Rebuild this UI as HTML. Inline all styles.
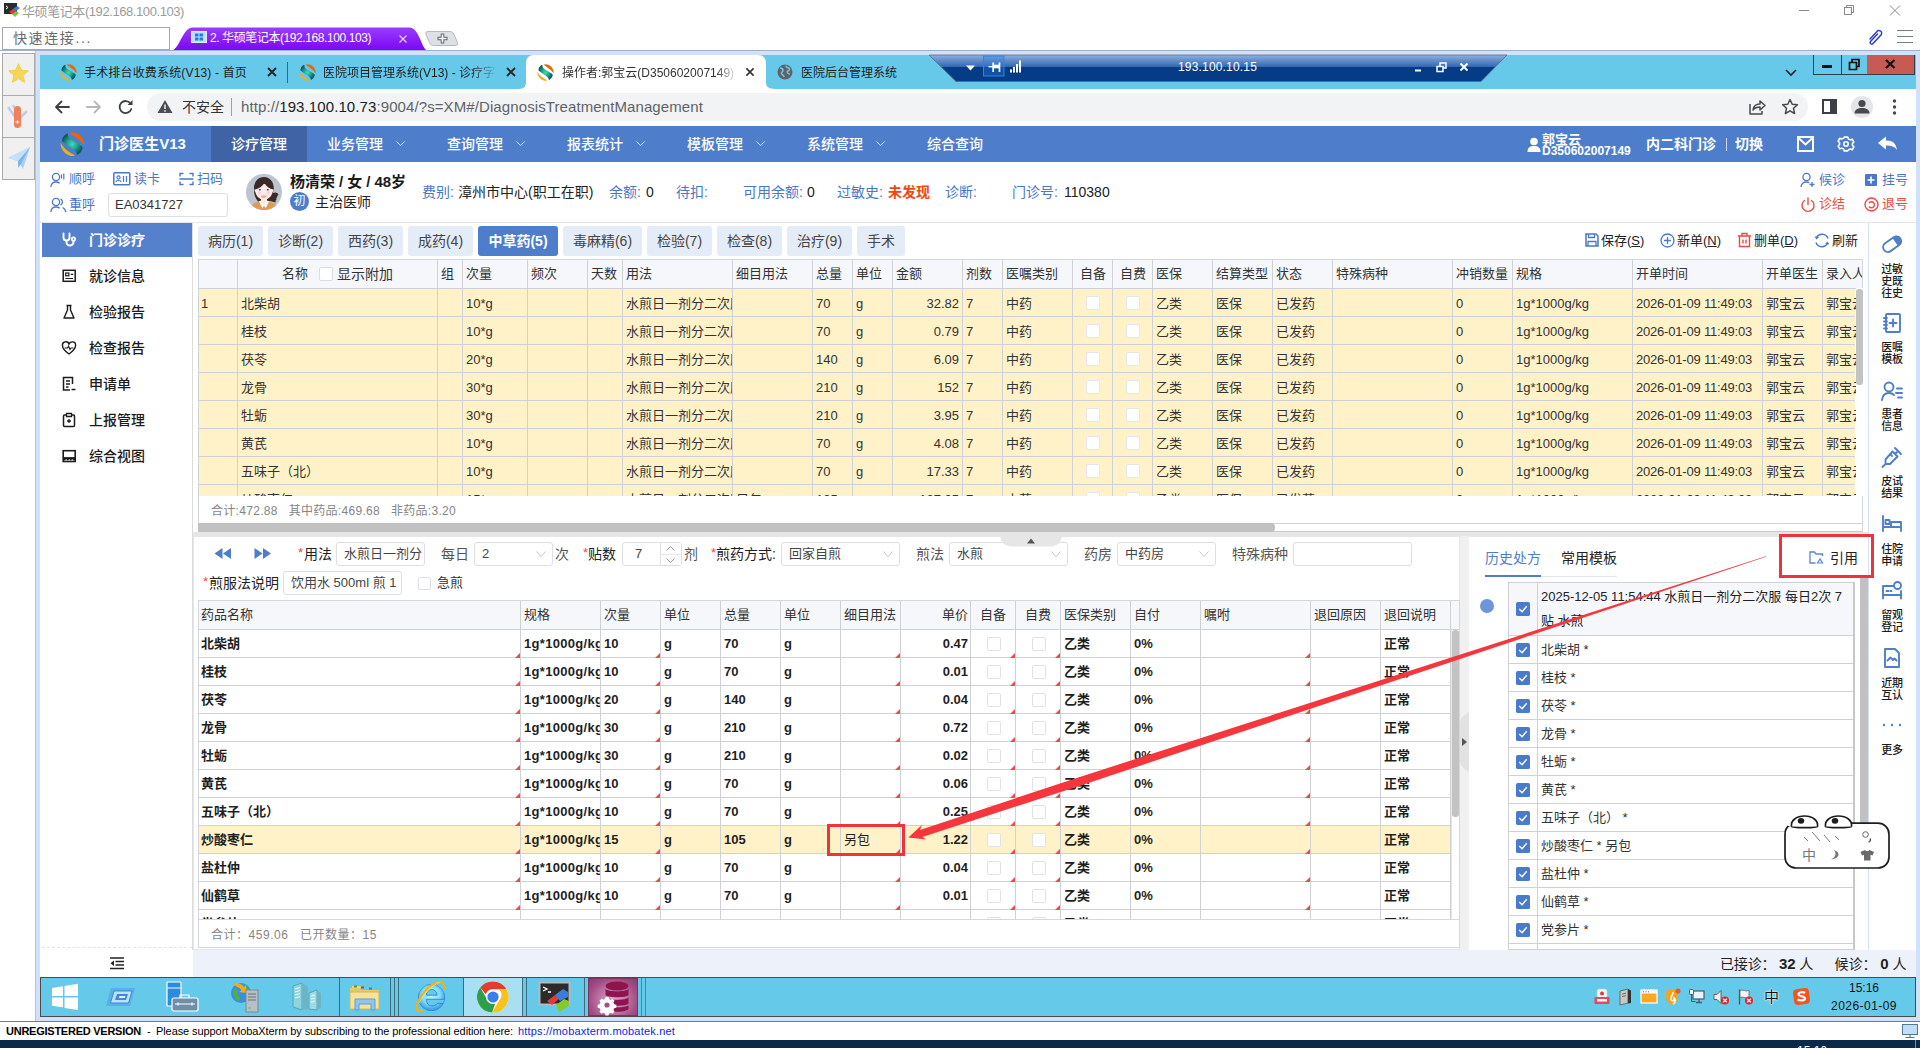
<!DOCTYPE html>
<html lang="zh"><head><meta charset="utf-8"><title>门诊医生V13</title>
<style>
html,body{margin:0;padding:0}
body{width:1920px;height:1048px;position:relative;overflow:hidden;background:#fff;font-family:"Liberation Sans","Noto Sans CJK SC",sans-serif;font-size:13px;color:#222}
div,svg,span{box-sizing:border-box}
body div{position:absolute}
.t{white-space:nowrap}
.b{font-weight:bold}
.bl{color:#4a78c6}
svg{position:absolute;overflow:visible}
.cb{width:14px;height:14px;border:1px solid #d8dce5;border-radius:2px;background:#fff}
.ck{width:15px;height:15px;border-radius:2px;background:#4a7bcb}
.tri{width:0;height:0;border-left:5px solid transparent;border-bottom:5px solid #ea4a50}
</style></head><body>

<svg style="left:4px;top:3px" width="17" height="17" viewBox="0 0 17 17"><rect x="0" y="0" width="13" height="11" fill="#2b2b2b"/><path d="M2 3l2 1.5-2 1.5" stroke="#fff" stroke-width="1" fill="none"/><path d="M5 9l4-3 3 2-4 3z" fill="#e23a3a"/><path d="M9 6l4-3 3 2-4 3z" fill="#3b7ddd"/><path d="M8 11l4-3 3 2-4 4z" fill="#7bc62d"/></svg>
<div class="t" style="left:22px;top:1px;height:22px;line-height:22px;font-size:13px;color:#9b9b9b;letter-spacing:-0.421px">华硕笔记本(192.168.100.103)</div>
<svg style="left:1790px;top:0" width="130" height="24" viewBox="0 0 130 24"><g stroke="#8a8a8a" stroke-width="1" fill="none"><path d="M9 10.5h10"/><rect x="54.5" y="7.500" width="7" height="7"/><path d="M56.500 7.500v-2h7v7h-2"/><path d="M100 5.500l10 10M110 5.500l-10 10"/></g></svg>
<div style="left:2px;top:27px;width:168px;height:23px;border:1px solid #a9a9a9;background:#fff"></div>
<div class="t" style="left:13px;top:27px;height:23px;line-height:23px;font-size:14px;color:#6a6a6a;letter-spacing:1.618px">快速连接...</div>
<svg style="left:170px;top:26px" width="300" height="26" viewBox="0 0 300 26"><defs><linearGradient id="pg" x1="0" y1="0" x2="0" y2="1"><stop offset="0" stop-color="#9a3cff"/><stop offset="1" stop-color="#7a06f2"/></linearGradient></defs><path d="M1 25 C10 23 12 3 22 1.500 L240 1.500 C250 3 251 23 258 25 Z" fill="url(#pg)"/><path d="M258 5.500 h22 q3 0 4 3 l3.500 8 q1 3-2 3 h-22 q-3 0-4-3 l-3.500-8 q-1-3 2-3z" fill="#dde1e6" stroke="#b3bac4" stroke-width="1"/><path d="M272.500 7.500v10M267.500 12.500h10" stroke="#666" stroke-width="3.600" fill="none"/><path d="M272.500 8.500v8M268.500 12.500h8" stroke="#f4f4f4" stroke-width="1.700" fill="none"/><g><rect x="21.500" y="5.500" width="15" height="11" fill="#bde0f8" stroke="#d9ecfb" stroke-width="1"/><path d="M25 7.500h3.500v3H25zM29.500 7.500H33v3h-3.500zM25 11.500h3.500v3H25zM29.500 11.500H33v3h-3.500z" fill="#1b7fe0"/><path d="M25 19.500h8M29 17v2.500" stroke="#2c5a5f" stroke-width="1.500"/></g><path d="M229.500 9.500l7 7M236.500 9.500l-7 7" stroke="#e9d8ff" stroke-width="1.100"/></svg>
<div class="t" style="left:210px;top:27px;height:23px;line-height:23px;font-size:12px;color:#fff;letter-spacing:-0.417px">2. 华硕笔记本(192.168.100.103)</div>
<svg style="left:1866px;top:28px" width="50" height="18" viewBox="0 0 50 18"><path d="M4 11l7-7.500a2.600 2.600 0 0 1 4 3.500l-8 8.500a1.600 1.600 0 0 1-2.500-2l7-7.500" stroke="#2e3fc0" stroke-width="1.500" fill="none" stroke-linecap="round"/><path d="M31 2.500h16M31 8.500h16M31 14.500h16" stroke="#6f7f86" stroke-width="1.200"/></svg>
<div style="left:0px;top:50px;width:1920px;height:1px;background:#9fb0c8"></div>
<div style="left:35px;top:51px;width:1885px;height:971px;background:#cfe1fb"></div>
<div style="left:35px;top:51px;width:1px;height:971px;background:#b9c3d6"></div>
<div style="left:0px;top:51px;width:35px;height:971px;background:#fff"></div>
<div style="left:2px;top:53px;width:33px;height:127px;background:#f0f0f0;border:1px solid #aaa"></div>
<div style="left:3px;top:95px;width:31px;height:1px;background:#aaa"></div>
<div style="left:3px;top:137px;width:31px;height:1px;background:#aaa"></div>
<svg style="left:6px;top:61px" width="25" height="25" viewBox="0 0 28 28"><path d="M14 3l3.300 7.200 7.700.800-5.800 5.200 1.700 7.800L14 20l-6.900 4 1.700-7.800L3 11l7.700-.800z" fill="#f6d657" stroke="#f0c93c" stroke-width=".8" stroke-linejoin="round"/></svg>
<svg style="left:5px;top:101px" width="28" height="30" viewBox="0 0 28 30"><path d="M3 6l10 14M8 4l8 14M22 10l-12 12" stroke="#c3c9e8" stroke-width="2.500" fill="none"/><rect x="9" y="5" width="7" height="22" rx="3.500" fill="#f0805c"/><path d="M12.500 19v4M10.500 21h4" stroke="#fff" stroke-width="1"/></svg>
<svg style="left:5px;top:143px" width="28" height="30" viewBox="0 0 28 30"><path d="M3 15L25 4 18 26l-5-8z" fill="#a9d0f2"/><path d="M25 4L13 18v7l3-4" fill="#7fb5e6"/><path d="M3 15l10 3L25 4z" fill="#c5e0f8"/></svg>
<div style="left:40px;top:55px;width:1876px;height:962px;background:#fff"></div>
<div style="left:40px;top:55px;width:1876px;height:34px;background:#67c9ea"></div>
<svg style="left:59.5px;top:63.5px" width="17.0" height="17.0" viewBox="0 0 24.400 24.400"><defs><radialGradient id="lgr1" cx="12.200" cy="12.200" r="10.500" gradientUnits="userSpaceOnUse"><stop offset="0" stop-color="#40dfb9"/><stop offset=".55" stop-color="#1f9c8a"/><stop offset="1" stop-color="#095a5b"/></radialGradient></defs><path d="M9.300 1C12.500 -.8 18 .5 21 4.500c2.200 2.800 3.300 5.800 2.900 8.300-.1.300-.4.300-.6 0C21.500 9.300 15.500 5 9.300 1z" fill="#ee6403"/><path d="M7.500 1.200C4.500 2.500 2.500 5 2.200 7.500c-.2 1.500 0 2 1.300 3C8.500 14.500 15 17.500 16.300 20.500c.5 1 .5 2 .8 2.300C19.500 22 21.500 20 22.400 17c.3-1.500 0-2.500-1.400-3.500C16 10 9.500 7.500 8.200 4.500 7.700 3.300 8 2 7.500 1.200z" fill="url(#lgr1)"/><path d="M.5 10.600C.2 14 1.700 18 5 21c3 2.600 7 3.700 9.300 2.800.4-.2.400-.5 0-.8C9 20.500 3 16 .5 10.600z" fill="#f2ad1c"/></svg>
<div class="t" style="left:84px;top:61px;height:24px;line-height:24px;font-size:12px;color:#1d1d1d;letter-spacing:0.166px">手术排台收费系统(V13) - 首页</div>
<svg style="left:266px;top:66px" width="12" height="12" viewBox="-6 -6 12 12"><path d="M-4 -4L4 4M4 -4L-4 4" stroke="#222" stroke-width="1.8"/></svg>
<div style="left:287px;top:62px;width:1px;height:21px;background:#46626e"></div>
<svg style="left:298.5px;top:63.5px" width="17.0" height="17.0" viewBox="0 0 24.400 24.400"><defs><radialGradient id="lgr2" cx="12.200" cy="12.200" r="10.500" gradientUnits="userSpaceOnUse"><stop offset="0" stop-color="#40dfb9"/><stop offset=".55" stop-color="#1f9c8a"/><stop offset="1" stop-color="#095a5b"/></radialGradient></defs><path d="M9.300 1C12.500 -.8 18 .5 21 4.500c2.200 2.800 3.300 5.800 2.900 8.300-.1.300-.4.300-.6 0C21.500 9.300 15.500 5 9.300 1z" fill="#ee6403"/><path d="M7.500 1.200C4.500 2.500 2.500 5 2.200 7.500c-.2 1.500 0 2 1.300 3C8.500 14.500 15 17.500 16.300 20.500c.5 1 .5 2 .8 2.300C19.500 22 21.500 20 22.400 17c.3-1.500 0-2.500-1.400-3.500C16 10 9.500 7.500 8.200 4.500 7.700 3.300 8 2 7.500 1.200z" fill="url(#lgr2)"/><path d="M.5 10.600C.2 14 1.700 18 5 21c3 2.600 7 3.700 9.300 2.800.4-.2.400-.5 0-.8C9 20.500 3 16 .5 10.600z" fill="#f2ad1c"/></svg>
<div class="t" style="left:323px;top:61px;height:24px;line-height:24px;font-size:12px;color:#1d1d1d;width:175px;overflow:hidden;-webkit-mask-image:linear-gradient(90deg,#000 85%,transparent);mask-image:linear-gradient(90deg,#000 85%,transparent)">医院项目管理系统(V13) - 诊疗字</div>
<svg style="left:505px;top:66px" width="12" height="12" viewBox="-6 -6 12 12"><path d="M-4 -4L4 4M4 -4L-4 4" stroke="#222" stroke-width="1.8"/></svg>
<svg style="left:518px;top:55px" width="258" height="34" viewBox="0 0 258 33" preserveAspectRatio="none"><path d="M0 33 C7 33 8 30 8 26 V8 C8 3 11 0 16 0 H240 C245 0 248 3 248 8 V26 C248 30 249 33 258 33 Z" fill="#fff"/></svg>
<svg style="left:536.5px;top:63.5px" width="17.0" height="17.0" viewBox="0 0 24.400 24.400"><defs><radialGradient id="lgr3" cx="12.200" cy="12.200" r="10.500" gradientUnits="userSpaceOnUse"><stop offset="0" stop-color="#40dfb9"/><stop offset=".55" stop-color="#1f9c8a"/><stop offset="1" stop-color="#095a5b"/></radialGradient></defs><path d="M9.300 1C12.500 -.8 18 .5 21 4.500c2.200 2.800 3.300 5.800 2.900 8.300-.1.300-.4.300-.6 0C21.500 9.300 15.500 5 9.300 1z" fill="#ee6403"/><path d="M7.500 1.200C4.500 2.500 2.500 5 2.200 7.500c-.2 1.500 0 2 1.300 3C8.500 14.500 15 17.500 16.300 20.500c.5 1 .5 2 .8 2.300C19.500 22 21.500 20 22.400 17c.3-1.500 0-2.500-1.400-3.500C16 10 9.500 7.500 8.200 4.500 7.700 3.300 8 2 7.500 1.200z" fill="url(#lgr3)"/><path d="M.5 10.600C.2 14 1.700 18 5 21c3 2.600 7 3.700 9.300 2.800.4-.2.400-.5 0-.8C9 20.500 3 16 .5 10.600z" fill="#f2ad1c"/></svg>
<div class="t" style="left:562px;top:61px;height:24px;line-height:24px;font-size:12px;color:#333;width:176px;overflow:hidden;-webkit-mask-image:linear-gradient(90deg,#000 88%,transparent);mask-image:linear-gradient(90deg,#000 88%,transparent)">操作者:郭宝云(D350602007149)</div>
<svg style="left:744px;top:66px" width="12" height="12" viewBox="-6 -6 12 12"><path d="M-3.6 -3.6L3.6 3.6M3.6 -3.6L-3.6 3.6" stroke="#333" stroke-width="1.6"/></svg>
<svg style="left:777px;top:64px" width="16" height="16" viewBox="0 0 16 16"><circle cx="8" cy="8" r="7.500" fill="#5f6368"/><path d="M3 4c2 0 3 1 3 2.500S4 8 4.500 9.500 7 11 7 13M9 1.500c0 2 1 2 2.500 2.500S13 6 11 7s0 3 2 3" stroke="#67c9ea" stroke-width="1.500" fill="none"/></svg>
<div class="t" style="left:801px;top:61px;height:24px;line-height:24px;font-size:12px;color:#1d1d1d">医院后台管理系统</div>
<svg style="left:925px;top:55px" width="590" height="28" viewBox="0 0 590 28"><defs><linearGradient id="cb" x1="0" y1="0" x2="0" y2="1"><stop offset="0" stop-color="#8db0de"/><stop offset=".44" stop-color="#3567b2"/><stop offset=".46" stop-color="#063b86"/><stop offset="1" stop-color="#063b86"/></linearGradient></defs><path d="M4 0 H582 L556 26.500 H31 Z" fill="url(#cb)" stroke="#5a6a80" stroke-width=".8"/><rect x="58.500" y="1" width="20.500" height="20" fill="#2a7fe0" fill-opacity=".35" stroke="#2a86e6" stroke-width="1"/><path d="M41 10.500h9l-4.500 5z" fill="#fff"/><path d="M63.500 11.700h5" stroke="#fff" stroke-width="1.400"/><path d="M68.200 7.500v9.500M74.500 7.500v9.500" stroke="#fff" stroke-width="1.700"/><path d="M68 11.500h7" stroke="#fff" stroke-width="3.600"/><path d="M86 17.500v-3M89 17.500v-5.500M92 17.500v-8.500M95 17.500v-12" stroke="#fff" stroke-width="2"/><path d="M490 15.500h6" stroke="#fff" stroke-width="2"/><path d="M512 11.500h6v5h-6zM515 11v-3h6v5h-3" stroke="#fff" stroke-width="1.500" fill="none"/><path d="M535.500 8.500l7 7M542.500 8.500l-7 7" stroke="#fff" stroke-width="2"/></svg>
<div class="t" style="left:1178px;top:56px;height:22px;line-height:22px;font-size:12px;color:#fff;letter-spacing:0.173px">193.100.10.15</div>
<svg style="left:1784px;top:67.500px" width="14" height="10" viewBox="0 0 14 10"><path d="M2 2l5 5 5-5" stroke="#222" stroke-width="1.600" fill="none"/></svg>
<div style="left:1813px;top:55px;width:102px;height:20px;background:#67c9ea;border:1px solid #2a3f48;border-top:none"></div>
<div style="left:1867px;top:55px;width:47px;height:19px;background:#c75a52"></div>
<div style="left:1841px;top:55px;width:1px;height:19px;background:#2a3f48"></div>
<svg style="left:1813px;top:55px" width="102" height="20" viewBox="0 0 102 20"><path d="M9 11.500h10" stroke="#111" stroke-width="3"/><path d="M36.500 7.500h7v7h-7zM39 7v-2.500h7v7h-2.500" stroke="#111" stroke-width="1.700" fill="none"/><path d="M73 5l8.500 8M81.500 5l-8.500 8" stroke="#111" stroke-width="2.300"/></svg>
<div style="left:40px;top:89px;width:1876px;height:36px;background:#fff"></div>
<div style="left:147px;top:93px;width:1661px;height:28px;background:#f1f3f4;border-radius:14px"></div>
<svg style="left:50px;top:96px" width="100" height="22" viewBox="0 0 100 22"><g fill="none" stroke-width="1.800" stroke-linecap="round" stroke-linejoin="round"><path d="M19 11H6M11.500 5.500L6 11l5.500 5.500" stroke="#3c4043"/><path d="M37 11h13M44.500 5.500L50 11l-5.500 5.500" stroke="#b5b8bb"/><path d="M80.500 7.500A6 6 0 1 0 81.300 13" stroke="#3c4043"/></g><path d="M82.500 4v5h-5z" fill="#3c4043"/></svg>
<svg style="left:157px;top:99px" width="16" height="15" viewBox="0 0 16 15"><path d="M8 1L15.500 14H.5z" fill="#4a4d51"/><path d="M8 5.500v4.500M8 11.300v1.500" stroke="#f1f3f4" stroke-width="1.500"/></svg>
<div class="t" style="left:182px;top:95px;height:24px;line-height:24px;font-size:14px;color:#333">不安全</div>
<div style="left:231px;top:98px;width:1px;height:18px;background:#9aa0a6"></div>
<div class="t url" style="left:241px;top:95px;height:24px;line-height:24px;font-size:15px;color:#202124;letter-spacing:0.098px"><span style="color:#5f6368">http://</span>193.100.10.73<span style="color:#5f6368">:9004/?s=XM#/DiagnosisTreatmentManagement</span></div>
<svg style="left:1745px;top:95px" width="165" height="24" viewBox="0 0 165 24"><g fill="none" stroke="#474a4d" stroke-width="1.500" stroke-linejoin="round"><path d="M5 9v10h12v-3"/><path d="M8 15c.5-4 3-6 7-6V6l5 4.500-5 4.500v-3c-3 0-5 .5-7 3z"/><path d="M45 4.500l2.200 4.800 5.200.500-3.900 3.500 1.100 5.200L45 15.800l-4.600 2.700 1.100-5.200-3.900-3.500 5.200-.500z"/></g><rect x="78" y="5" width="13" height="13" fill="none" stroke="#3c4043" stroke-width="2"/><rect x="85" y="5" width="6" height="13" fill="#3c4043"/><circle cx="117" cy="12" r="11" fill="#e3e5e8"/><circle cx="117" cy="8.500" r="3.600" fill="#474a4d"/><path d="M109.500 18.500c0-4 3.500-5.500 7.500-5.500s7.500 1.500 7.500 5.500z" fill="#474a4d"/><circle cx="149.500" cy="6" r="1.700" fill="#474a4d"/><circle cx="149.500" cy="12" r="1.700" fill="#474a4d"/><circle cx="149.500" cy="18" r="1.700" fill="#474a4d"/></svg>
<div style="left:40px;top:125px;width:1876px;height:1px;background:#fff"></div>
<div style="left:40px;top:126px;width:1876px;height:36px;background:#4e7ecb"></div>
<div style="left:211px;top:126px;width:96px;height:36px;background:#3f63a4"></div>
<svg style="left:59.8px;top:131.8px" width="24.4" height="24.4" viewBox="0 0 24.400 24.400"><defs><radialGradient id="lgr4" cx="12.200" cy="12.200" r="10.500" gradientUnits="userSpaceOnUse"><stop offset="0" stop-color="#40dfb9"/><stop offset=".55" stop-color="#1f9c8a"/><stop offset="1" stop-color="#095a5b"/></radialGradient></defs><path d="M9.300 1C12.500 -.8 18 .5 21 4.500c2.200 2.800 3.300 5.800 2.900 8.300-.1.300-.4.300-.6 0C21.500 9.300 15.500 5 9.300 1z" fill="#ee6403"/><path d="M7.500 1.200C4.500 2.500 2.500 5 2.200 7.500c-.2 1.500 0 2 1.300 3C8.500 14.500 15 17.500 16.300 20.500c.5 1 .5 2 .8 2.300C19.500 22 21.500 20 22.400 17c.3-1.500 0-2.500-1.400-3.500C16 10 9.500 7.500 8.200 4.500 7.700 3.300 8 2 7.500 1.200z" fill="url(#lgr4)"/><path d="M.5 10.600C.2 14 1.700 18 5 21c3 2.600 7 3.700 9.300 2.800.4-.2.400-.5 0-.8C9 20.500 3 16 .5 10.600z" fill="#f2ad1c"/></svg>
<div class="t" style="left:99px;top:126px;height:36px;line-height:36px;font-size:15px;font-weight:bold;color:#fff;letter-spacing:0.042px">门诊医生V13</div>
<div class="t" style="left:231px;top:126px;height:36px;line-height:36px;font-size:14px;color:#fff;font-weight:500">诊疗管理</div>
<div class="t" style="left:327px;top:126px;height:36px;line-height:36px;font-size:14px;color:#fff;font-weight:500">业务管理</div>
<svg style="left:396px;top:141px" width="9" height="6" viewBox="0 0 9 6"><path d="M.5.500l4 4 4-4" stroke="#dfe8f7" stroke-width="1" fill="none"/></svg>
<div class="t" style="left:447px;top:126px;height:36px;line-height:36px;font-size:14px;color:#fff;font-weight:500">查询管理</div>
<svg style="left:516px;top:141px" width="9" height="6" viewBox="0 0 9 6"><path d="M.5.500l4 4 4-4" stroke="#dfe8f7" stroke-width="1" fill="none"/></svg>
<div class="t" style="left:567px;top:126px;height:36px;line-height:36px;font-size:14px;color:#fff;font-weight:500">报表统计</div>
<svg style="left:636px;top:141px" width="9" height="6" viewBox="0 0 9 6"><path d="M.5.500l4 4 4-4" stroke="#dfe8f7" stroke-width="1" fill="none"/></svg>
<div class="t" style="left:687px;top:126px;height:36px;line-height:36px;font-size:14px;color:#fff;font-weight:500">模板管理</div>
<svg style="left:756px;top:141px" width="9" height="6" viewBox="0 0 9 6"><path d="M.5.500l4 4 4-4" stroke="#dfe8f7" stroke-width="1" fill="none"/></svg>
<div class="t" style="left:807px;top:126px;height:36px;line-height:36px;font-size:14px;color:#fff;font-weight:500">系统管理</div>
<svg style="left:876px;top:141px" width="9" height="6" viewBox="0 0 9 6"><path d="M.5.500l4 4 4-4" stroke="#dfe8f7" stroke-width="1" fill="none"/></svg>
<div class="t" style="left:927px;top:126px;height:36px;line-height:36px;font-size:14px;color:#fff;font-weight:500">综合查询</div>
<svg style="left:1527px;top:137px" width="14" height="16" viewBox="0 0 14 16"><circle cx="7" cy="4.500" r="3.800" fill="#fff"/><path d="M.5 15c0-5 3-6 6.500-6s6.500 1 6.500 6z" fill="#fff"/></svg>
<div class="t" style="left:1542px;top:133px;height:13px;line-height:13px;font-size:13px;font-weight:bold;color:#fff">郭宝云</div>
<div class="t" style="left:1542px;top:145px;height:13px;line-height:13px;font-size:12px;font-weight:bold;color:#fff">D350602007149</div>
<div class="t" style="left:1646px;top:126px;height:36px;line-height:36px;font-size:14px;font-weight:bold;color:#fff">内二科门诊</div>
<div style="left:1726px;top:138px;width:1px;height:13px;background:#c9d8f0"></div>
<div class="t" style="left:1735px;top:126px;height:36px;line-height:36px;font-size:14px;font-weight:bold;color:#fff">切换</div>
<svg style="left:1796px;top:134px" width="110" height="20" viewBox="0 0 110 20"><rect x="2" y="3" width="15" height="14" fill="none" stroke="#fff" stroke-width="2"/><path d="M3 4.500l6.500 6 6.500-6" stroke="#fff" stroke-width="2" fill="none"/><g transform="translate(50,10) scale(.86)"><path d="M-2-8h4l.8 2.200 2.200 1 2.200-.9 2 3.400-1.700 1.600v2.400l1.700 1.600-2 3.400-2.200-.9-2.200 1L2 8h-4l-.8-2.200-2.200-1-2.200.9-2-3.400 1.700-1.600v-2.400l-1.700-1.600 2-3.400 2.200.9 2.200-1z" fill="none" stroke="#fff" stroke-width="1.800" stroke-linejoin="round"/><circle r="2.600" fill="none" stroke="#fff" stroke-width="1.800"/></g><path d="M82 9l8-6.500v4c7 0 10 3 11 9.500-2.500-3.500-5.500-4.500-11-4.500v4z" fill="#fff"/></svg>
<div style="left:40px;top:162px;width:1876px;height:60px;background:#fff"></div>
<div style="left:40px;top:222px;width:1876px;height:1px;background:#e3e6ec"></div>
<svg style="left:50px;top:172px" width="18" height="16" viewBox="0 0 18 16"><circle cx="6" cy="5" r="3.600" fill="none" stroke="#4a78c6" stroke-width="1.300"/><path d="M.8 15c.4-3.500 2.500-5 5.200-5 1.500 0 2.800.5 3.600 1.300" fill="none" stroke="#4a78c6" stroke-width="1.300"/><path d="M11.500 2.500v4M13.800 1.500v6" stroke="#4a78c6" stroke-width="1.200"/></svg>
<div class="t" style="left:69px;top:168px;height:22px;line-height:22px;font-size:13px;color:#4a78c6">顺呼</div>
<svg style="left:113px;top:172px" width="18" height="14" viewBox="0 0 18 14"><rect x=".8" y=".8" width="16" height="12" rx="1" fill="none" stroke="#4a78c6" stroke-width="1.500"/><circle cx="5.500" cy="5.500" r="1.600" fill="none" stroke="#4a78c6" stroke-width="1.100"/><path d="M3 10c0-2 5-2 5 0M10.500 4v6M13.500 4v6" stroke="#4a78c6" stroke-width="1.200" fill="none"/></svg>
<div class="t" style="left:134px;top:168px;height:22px;line-height:22px;font-size:13px;color:#4a78c6">读卡</div>
<svg style="left:179px;top:172px" width="15" height="14" viewBox="0 0 15 14"><path d="M1 4.500V1.500h3.500M10.500 1.500H14v3M14 9.500v3h-3.500M4.500 12.500H1v-3M.5 7h14" stroke="#4a78c6" stroke-width="1.400" fill="none"/></svg>
<div class="t" style="left:197px;top:168px;height:22px;line-height:22px;font-size:13px;color:#4a78c6">扫码</div>
<svg style="left:50px;top:197px" width="18" height="16" viewBox="0 0 18 16"><circle cx="6" cy="5" r="3.600" fill="none" stroke="#4a78c6" stroke-width="1.300"/><path d="M.8 15c.4-3.500 2.500-5 5.200-5 1.500 0 2.800.5 3.600 1.300" fill="none" stroke="#4a78c6" stroke-width="1.300"/><path d="M10.500 1.800a3.600 3.600 0 0 1 0 6.400M12.500 10.500c1.800.8 3 2.300 3.300 4.500" stroke="#4a78c6" stroke-width="1.300" fill="none"/></svg>
<div class="t" style="left:69px;top:194px;height:22px;line-height:22px;font-size:13px;color:#4a78c6">重呼</div>
<div style="left:108px;top:193px;width:120px;height:24px;border:1px solid #dcdfe6;border-radius:3px;background:#fff"></div>
<div class="t" style="left:115px;top:193px;height:24px;line-height:24px;font-size:13px;color:#333">EA0341727</div>
<svg style="left:246px;top:174px" width="36" height="36" viewBox="0 0 36 36"><defs><clipPath id="av"><circle cx="18" cy="18" r="18"/></clipPath></defs><g clip-path="url(#av)"><rect width="36" height="36" fill="#bdc4d0"/><path d="M8 16C7.500 8 12 3 18 3s10.500 5 9.500 13l-.5 3c3-1.500 5 0 5.500 2-1 .3-1.500 1-1.200 2 -1 .5-1.200 1.500-.8 2.500-1 .5-1 1.500-1 3L24 27l-12 .5C9 24 8 20 8 16z" fill="#3b2b27"/><path d="M5.500 31.500C8 28.500 12 27.500 18 27.500s10 1 12.500 4L26 37H10z" fill="#dd9c55"/><path d="M13 27.500l2-1h6l2 1-3.300 6.500-1.700-2.200-1.700 2.200z" fill="#fff"/><path d="M15 23h6v5.500l-3 3.500-3-3.500z" fill="#fbe9e6"/><path d="M8.800 15c-.5 1.200-.3 2.500.6 3C10 22 13.500 25.500 18 25.500S26 22 26.600 18c.9-.5 1.100-1.800.6-3L24 10h-12z" fill="#fcebe8"/><path d="M8.300 15.500C8 9 12 5 18 5s10 4 9.500 10.500c-4-.5-7.500-3-9.200-7-1.500 4-5.500 6.500-10 7z" fill="#3b2b27"/><ellipse cx="13.900" cy="15.700" rx="1.100" ry=".75" fill="#2e2e60"/><ellipse cx="21.800" cy="15.700" rx="1.100" ry=".75" fill="#2e2e60"/><circle cx="13.300" cy="19" r="1.700" fill="#f8cfcf" opacity=".8"/><circle cx="22.400" cy="19" r="1.700" fill="#f8cfcf" opacity=".8"/><path d="M14.800 21.200c2 .5 4 .5 6 0-.3 2-1.500 2.800-3 2.800s-2.700-.8-3-2.800z" fill="#f4a99c"/></g></svg>
<div class="t" style="left:290px;top:170px;height:24px;line-height:24px;font-size:15px;font-weight:bold;color:#1a1a1a;letter-spacing:-0.054px">杨清荣 / 女 / 48岁</div>
<div style="left:290px;top:192px;width:19px;height:19px;background:#4e7ecb;border-radius:50%"></div>
<div class="t" style="left:290px;top:192px;height:19px;line-height:19px;font-size:12px;color:#fff;width:19px;text-align:center">初</div>
<div class="t" style="left:315px;top:191px;height:22px;line-height:22px;font-size:14px;color:#222">主治医师</div>
<div class="t" style="left:422px;top:181px;height:22px;line-height:22px;font-size:14px;color:#4a78c6">费别:</div>
<div class="t" style="left:458px;top:181px;height:22px;line-height:22px;font-size:14px;color:#222">漳州市中心(职工在职)</div>
<div class="t" style="left:609px;top:181px;height:22px;line-height:22px;font-size:14px;color:#4a78c6">余额:</div>
<div class="t" style="left:646px;top:181px;height:22px;line-height:22px;font-size:14px;color:#222">0</div>
<div class="t" style="left:676px;top:181px;height:22px;line-height:22px;font-size:14px;color:#4a78c6">待扣:</div>
<div class="t" style="left:743px;top:181px;height:22px;line-height:22px;font-size:14px;color:#4a78c6">可用余额:</div>
<div class="t" style="left:807px;top:181px;height:22px;line-height:22px;font-size:14px;color:#222">0</div>
<div class="t" style="left:837px;top:181px;height:22px;line-height:22px;font-size:14px;color:#4a78c6">过敏史:</div>
<div class="t" style="left:945px;top:181px;height:22px;line-height:22px;font-size:14px;color:#4a78c6">诊断:</div>
<div class="t" style="left:1012px;top:181px;height:22px;line-height:22px;font-size:14px;color:#4a78c6">门诊号:</div>
<div class="t" style="left:1064px;top:181px;height:22px;line-height:22px;font-size:14px;color:#222">110380</div>
<div class="t" style="left:888px;top:181px;height:22px;line-height:22px;font-size:14px;font-weight:bold;color:#f4450f">未发现</div>
<svg style="left:1800px;top:172px" width="16" height="16" viewBox="0 0 16 16"><circle cx="6.500" cy="5" r="3.600" fill="none" stroke="#4a78c6" stroke-width="1.300"/><path d="M1 15c.4-3.500 2.500-5 5.500-5 1 0 2 .2 2.800.7M12 10v5M9.500 12.500h5" fill="none" stroke="#4a78c6" stroke-width="1.300"/></svg>
<div class="t" style="left:1819px;top:169px;height:22px;line-height:22px;font-size:13px;color:#4a78c6">候诊</div>
<svg style="left:1865px;top:174px" width="12" height="12" viewBox="0 0 12 12"><rect width="12" height="12" rx="1" fill="#4a78c6"/><path d="M6 2.500v7M2.500 6h7" stroke="#fff" stroke-width="1.600"/></svg>
<div class="t" style="left:1882px;top:169px;height:22px;line-height:22px;font-size:13px;color:#4a78c6">挂号</div>
<svg style="left:1800px;top:197px" width="16" height="16" viewBox="0 0 16 16"><path d="M4.500 3.500a6 6 0 1 0 7 0M8 1v6.500" fill="none" stroke="#f0483e" stroke-width="1.400" stroke-linecap="round"/></svg>
<div class="t" style="left:1819px;top:193px;height:22px;line-height:22px;font-size:13px;color:#f0483e">诊结</div>
<svg style="left:1864px;top:197px" width="15" height="15" viewBox="0 0 15 15"><circle cx="7.500" cy="7.500" r="6.500" fill="none" stroke="#f0483e" stroke-width="1.400"/><path d="M5 6a3 3 0 1 1 0 3.500" fill="none" stroke="#f0483e" stroke-width="1.400"/></svg>
<div class="t" style="left:1882px;top:193px;height:22px;line-height:22px;font-size:13px;color:#f0483e">退号</div>
<div style="left:40px;top:223px;width:153px;height:754px;background:#fff"></div>
<div style="left:192px;top:223px;width:1px;height:727px;background:#dcdcdc"></div>
<div style="left:193px;top:223px;width:1675px;height:727px;background:#fff"></div>
<div style="left:42px;top:223px;width:150px;height:34px;background:#5580cc"></div>
<svg style="left:61px;top:232px" width="16" height="16" viewBox="0 0 16 16"><path d="M2.500 1.500v4a3 3 0 0 0 6 0v-4M5.500 8.500v1.500a3.500 3.500 0 0 0 7 0v-1" fill="none" stroke="#fff" stroke-width="1.900" stroke-linecap="round"/><circle cx="12.500" cy="7" r="1.700" fill="none" stroke="#fff" stroke-width="1.700"/></svg>
<div class="t" style="left:89px;top:228px;height:24px;line-height:24px;font-size:14px;color:#fff;font-weight:bold">门诊诊疗</div>
<svg style="left:61px;top:268px" width="16" height="16" viewBox="0 0 16 16"><rect x="2.200" y="2.300" width="12" height="11" fill="none" stroke="#1c1c1c" stroke-width="1.500"/><rect x="4.700" y="5" width="3.200" height="2.800" fill="none" stroke="#1c1c1c" stroke-width="1.200"/><path d="M9.800 6.400h2.400M4.500 10.500h7.500" stroke="#1c1c1c" stroke-width="1.200"/></svg>
<div class="t" style="left:89px;top:264px;height:24px;line-height:24px;font-size:14px;color:#1c1c1c;font-weight:500">就诊信息</div>
<svg style="left:61px;top:304px" width="16" height="16" viewBox="0 0 16 16"><path d="M5.500 1.500h5M6.500 1.500v4.500l-3.500 8h10l-3.500-8v-4.500" fill="none" stroke="#1c1c1c" stroke-width="1.400" stroke-linejoin="round"/></svg>
<div class="t" style="left:89px;top:300px;height:24px;line-height:24px;font-size:14px;color:#1c1c1c;font-weight:500">检验报告</div>
<svg style="left:61px;top:340px" width="16" height="16" viewBox="0 0 16 16"><path d="M8 14C3 10.500 1.500 8 1.500 5.800A3.300 3.300 0 0 1 8 4.500a3.300 3.300 0 0 1 6.500 1.300C14.500 8 13 10.500 8 14z" fill="none" stroke="#1c1c1c" stroke-width="1.400"/><path d="M3.500 8h3l1-2 1.500 3.500 1-1.500h2.500" fill="none" stroke="#1c1c1c" stroke-width="1.100"/></svg>
<div class="t" style="left:89px;top:336px;height:24px;line-height:24px;font-size:14px;color:#1c1c1c;font-weight:500">检查报告</div>
<svg style="left:61px;top:376px" width="16" height="16" viewBox="0 0 16 16"><path d="M11.500 8V1.500h-9v12.500h6.500" fill="none" stroke="#1c1c1c" stroke-width="1.500"/><path d="M5 5h4M5 8h4M5 11h2.500M10.500 13.500h4" stroke="#1c1c1c" stroke-width="1.300"/></svg>
<div class="t" style="left:89px;top:372px;height:24px;line-height:24px;font-size:14px;color:#1c1c1c;font-weight:500">申请单</div>
<svg style="left:61px;top:412px" width="16" height="16" viewBox="0 0 16 16"><rect x="2.500" y="3" width="11" height="11.500" rx="1" fill="none" stroke="#1c1c1c" stroke-width="1.500"/><path d="M5.500 1.500h5v3h-5z" fill="#fff" stroke="#1c1c1c" stroke-width="1.300"/><path d="M8 7v4M6 9h4" stroke="#1c1c1c" stroke-width="1.300"/></svg>
<div class="t" style="left:89px;top:408px;height:24px;line-height:24px;font-size:14px;color:#1c1c1c;font-weight:500">上报管理</div>
<svg style="left:61px;top:448px" width="16" height="16" viewBox="0 0 16 16"><rect x="2.200" y="2.700" width="12" height="10.800" fill="none" stroke="#1c1c1c" stroke-width="1.600"/><path d="M2.200 10.700h12" stroke="#1c1c1c" stroke-width="3.200"/><path d="M5.200 11.200v1.600M8.200 11.200v1.600M11.200 11.200v1.600" stroke="#fff" stroke-width=".9"/></svg>
<div class="t" style="left:89px;top:444px;height:24px;line-height:24px;font-size:14px;color:#1c1c1c;font-weight:500">综合视图</div>
<div style="left:42px;top:947px;width:150px;height:1px;border-top:1px dashed #dde3f0"></div>
<svg style="left:110px;top:956.500px" width="14" height="13" viewBox="0 0 14 13"><path d="M0 1h14M5.500 4.500h8.500M5.500 8h8.500M0 11.500h14" stroke="#222" stroke-width="1.400"/><path d="M4 3.500v5.500L.5 6.300z" fill="#222"/></svg>
<div style="left:193px;top:223px;width:1675px;height:37px;background:#fff"></div>
<div style="left:198px;top:226px;width:65px;height:30px;background:#e4ecf8;color:#444;border-radius:3px;font-size:14px;text-align:center;line-height:30px;white-space:nowrap">病历(1)</div>
<div style="left:268px;top:226px;width:65px;height:30px;background:#e4ecf8;color:#444;border-radius:3px;font-size:14px;text-align:center;line-height:30px;white-space:nowrap">诊断(2)</div>
<div style="left:338px;top:226px;width:65px;height:30px;background:#e4ecf8;color:#444;border-radius:3px;font-size:14px;text-align:center;line-height:30px;white-space:nowrap">西药(3)</div>
<div style="left:408px;top:226px;width:65px;height:30px;background:#e4ecf8;color:#444;border-radius:3px;font-size:14px;text-align:center;line-height:30px;white-space:nowrap">成药(4)</div>
<div style="left:478px;top:226px;width:80px;height:30px;background:#4d7dcb;color:#fff;font-weight:bold;border-radius:3px;font-size:14px;text-align:center;line-height:30px;white-space:nowrap">中草药(5)</div>
<div style="left:563px;top:226px;width:79px;height:30px;background:#e4ecf8;color:#444;border-radius:3px;font-size:14px;text-align:center;line-height:30px;white-space:nowrap">毒麻精(6)</div>
<div style="left:647px;top:226px;width:65px;height:30px;background:#e4ecf8;color:#444;border-radius:3px;font-size:14px;text-align:center;line-height:30px;white-space:nowrap">检验(7)</div>
<div style="left:717px;top:226px;width:65px;height:30px;background:#e4ecf8;color:#444;border-radius:3px;font-size:14px;text-align:center;line-height:30px;white-space:nowrap">检查(8)</div>
<div style="left:787px;top:226px;width:65px;height:30px;background:#e4ecf8;color:#444;border-radius:3px;font-size:14px;text-align:center;line-height:30px;white-space:nowrap">治疗(9)</div>
<div style="left:857px;top:226px;width:48px;height:30px;background:#e4ecf8;color:#444;border-radius:3px;font-size:14px;text-align:center;line-height:30px;white-space:nowrap">手术</div>
<svg style="left:1585px;top:233px" width="14" height="14" viewBox="0 0 14 14"><path d="M1 1h10l2 2v10H1z" fill="none" stroke="#4a78c6" stroke-width="1.500"/><path d="M3.500 1v3.500h6V1M3 13V8.500h8V13" fill="none" stroke="#4a78c6" stroke-width="1.300"/></svg>
<div class="t" style="left:1601px;top:230px;height:22px;line-height:22px;font-size:13px;color:#222">保存(<u>S</u>)</div>
<svg style="left:1660px;top:233px" width="15" height="15" viewBox="0 0 15 15"><circle cx="7.500" cy="7.500" r="6.500" fill="none" stroke="#4a78c6" stroke-width="1.300"/><path d="M7.500 4v7M4 7.500h7" stroke="#4a78c6" stroke-width="1.300"/></svg>
<div class="t" style="left:1677px;top:230px;height:22px;line-height:22px;font-size:13px;color:#222">新单(<u>N</u>)</div>
<svg style="left:1737px;top:232px" width="15" height="16" viewBox="0 0 15 16"><path d="M1 4h13M5 4V1.500h5V4M2.500 4v10.500h10V4M6 7.500v4M9 7.500v4" fill="none" stroke="#f0483e" stroke-width="1.400"/></svg>
<div class="t" style="left:1754px;top:230px;height:22px;line-height:22px;font-size:13px;color:#222">删单(<u>D</u>)</div>
<svg style="left:1814px;top:233px" width="16" height="15" viewBox="0 0 16 15"><path d="M14 5.500A6.300 6.300 0 0 0 2.500 4.500M2 9.500A6.300 6.300 0 0 0 13.500 10.500" fill="none" stroke="#4a78c6" stroke-width="1.400"/><path d="M.5 3.500l2 3 2.500-2.500zM15.500 11.500l-2-3-2.500 2.500z" fill="#4a78c6"/></svg>
<div class="t" style="left:1832px;top:230px;height:22px;line-height:22px;font-size:13px;color:#222">刷新</div>
<div style="left:198px;top:259px;width:1665px;height:265px;background:#fff;border:1px solid #d4d7de"></div>
<div style="left:198px;top:260px;width:1664px;height:236px;overflow:hidden">
<div style="left:0;top:0;width:1664px;height:29px;background:#f5f7fb;border-bottom:1px solid #d0d1d5"></div>
<div style="left:0px;top:0;width:40px;height:29px;line-height:28px;border-right:1px solid #d0d1d5;padding-left:3px;white-space:nowrap;overflow:hidden;color:#333"></div>
<div style="left:40px;top:0;width:200px;height:29px;line-height:28px;border-right:1px solid #d0d1d5;padding-left:3px;white-space:nowrap;overflow:hidden;color:#333"><span style="position:absolute;left:44px">名称</span><div class="cb" style="left:81px;top:7px"></div><span style="position:absolute;left:99px;font-size:14px">显示附加</span></div>
<div style="left:240px;top:0;width:25px;height:29px;line-height:28px;border-right:1px solid #d0d1d5;padding-left:3px;white-space:nowrap;overflow:hidden;color:#333">组</div>
<div style="left:265px;top:0;width:65px;height:29px;line-height:28px;border-right:1px solid #d0d1d5;padding-left:3px;white-space:nowrap;overflow:hidden;color:#333">次量</div>
<div style="left:330px;top:0;width:60px;height:29px;line-height:28px;border-right:1px solid #d0d1d5;padding-left:3px;white-space:nowrap;overflow:hidden;color:#333">频次</div>
<div style="left:390px;top:0;width:35px;height:29px;line-height:28px;border-right:1px solid #d0d1d5;padding-left:3px;white-space:nowrap;overflow:hidden;color:#333">天数</div>
<div style="left:425px;top:0;width:110px;height:29px;line-height:28px;border-right:1px solid #d0d1d5;padding-left:3px;white-space:nowrap;overflow:hidden;color:#333">用法</div>
<div style="left:535px;top:0;width:80px;height:29px;line-height:28px;border-right:1px solid #d0d1d5;padding-left:3px;white-space:nowrap;overflow:hidden;color:#333">细目用法</div>
<div style="left:615px;top:0;width:40px;height:29px;line-height:28px;border-right:1px solid #d0d1d5;padding-left:3px;white-space:nowrap;overflow:hidden;color:#333">总量</div>
<div style="left:655px;top:0;width:40px;height:29px;line-height:28px;border-right:1px solid #d0d1d5;padding-left:3px;white-space:nowrap;overflow:hidden;color:#333">单位</div>
<div style="left:695px;top:0;width:70px;height:29px;line-height:28px;border-right:1px solid #d0d1d5;padding-left:3px;white-space:nowrap;overflow:hidden;color:#333">金额</div>
<div style="left:765px;top:0;width:40px;height:29px;line-height:28px;border-right:1px solid #d0d1d5;padding-left:3px;white-space:nowrap;overflow:hidden;color:#333">剂数</div>
<div style="left:805px;top:0;width:70px;height:29px;line-height:28px;border-right:1px solid #d0d1d5;padding-left:3px;white-space:nowrap;overflow:hidden;color:#333">医嘱类别</div>
<div style="left:875px;top:0;width:40px;height:29px;line-height:28px;border-right:1px solid #d0d1d5;padding-left:3px;white-space:nowrap;overflow:hidden;color:#333;padding-left:7px">自备</div>
<div style="left:915px;top:0;width:40px;height:29px;line-height:28px;border-right:1px solid #d0d1d5;padding-left:3px;white-space:nowrap;overflow:hidden;color:#333;padding-left:7px">自费</div>
<div style="left:955px;top:0;width:60px;height:29px;line-height:28px;border-right:1px solid #d0d1d5;padding-left:3px;white-space:nowrap;overflow:hidden;color:#333">医保</div>
<div style="left:1015px;top:0;width:60px;height:29px;line-height:28px;border-right:1px solid #d0d1d5;padding-left:3px;white-space:nowrap;overflow:hidden;color:#333">结算类型</div>
<div style="left:1075px;top:0;width:60px;height:29px;line-height:28px;border-right:1px solid #d0d1d5;padding-left:3px;white-space:nowrap;overflow:hidden;color:#333">状态</div>
<div style="left:1135px;top:0;width:120px;height:29px;line-height:28px;border-right:1px solid #d0d1d5;padding-left:3px;white-space:nowrap;overflow:hidden;color:#333">特殊病种</div>
<div style="left:1255px;top:0;width:60px;height:29px;line-height:28px;border-right:1px solid #d0d1d5;padding-left:3px;white-space:nowrap;overflow:hidden;color:#333">冲销数量</div>
<div style="left:1315px;top:0;width:120px;height:29px;line-height:28px;border-right:1px solid #d0d1d5;padding-left:3px;white-space:nowrap;overflow:hidden;color:#333">规格</div>
<div style="left:1435px;top:0;width:130px;height:29px;line-height:28px;border-right:1px solid #d0d1d5;padding-left:3px;white-space:nowrap;overflow:hidden;color:#333">开单时间</div>
<div style="left:1565px;top:0;width:60px;height:29px;line-height:28px;border-right:1px solid #d0d1d5;padding-left:3px;white-space:nowrap;overflow:hidden;color:#333">开单医生</div>
<div style="left:1625px;top:0;width:40px;height:29px;line-height:28px;border-right:1px solid #d0d1d5;padding-left:3px;white-space:nowrap;overflow:hidden;color:#333">录入人</div>
<div style="left:0;top:29px;width:1657px;height:28px;background:#fff2c9;border-bottom:1px solid #d0d1d5"></div>
<div style="left:0px;top:29px;width:40px;height:28px;line-height:29.500px;border-right:1px solid #d0d1d5;padding-left:3px;white-space:nowrap;overflow:hidden;color:#333">1</div>
<div style="left:40px;top:29px;width:200px;height:28px;line-height:29.500px;border-right:1px solid #d0d1d5;padding-left:3px;white-space:nowrap;overflow:hidden;color:#333">北柴胡</div>
<div style="left:240px;top:29px;width:25px;height:28px;line-height:29.500px;border-right:1px solid #d0d1d5;padding-left:3px;white-space:nowrap;overflow:hidden;color:#333"></div>
<div style="left:265px;top:29px;width:65px;height:28px;line-height:29.500px;border-right:1px solid #d0d1d5;padding-left:3px;white-space:nowrap;overflow:hidden;color:#333">10*g</div>
<div style="left:330px;top:29px;width:60px;height:28px;line-height:29.500px;border-right:1px solid #d0d1d5;padding-left:3px;white-space:nowrap;overflow:hidden;color:#333"></div>
<div style="left:390px;top:29px;width:35px;height:28px;line-height:29.500px;border-right:1px solid #d0d1d5;padding-left:3px;white-space:nowrap;overflow:hidden;color:#333"></div>
<div style="left:425px;top:29px;width:110px;height:28px;line-height:29.500px;border-right:1px solid #d0d1d5;padding-left:3px;white-space:nowrap;overflow:hidden;color:#333">水煎日一剂分二次服</div>
<div style="left:535px;top:29px;width:80px;height:28px;line-height:29.500px;border-right:1px solid #d0d1d5;padding-left:3px;white-space:nowrap;overflow:hidden;color:#333"></div>
<div style="left:615px;top:29px;width:40px;height:28px;line-height:29.500px;border-right:1px solid #d0d1d5;padding-left:3px;white-space:nowrap;overflow:hidden;color:#333">70</div>
<div style="left:655px;top:29px;width:40px;height:28px;line-height:29.500px;border-right:1px solid #d0d1d5;padding-left:3px;white-space:nowrap;overflow:hidden;color:#333">g</div>
<div style="left:695px;top:29px;width:70px;height:28px;line-height:29.500px;border-right:1px solid #d0d1d5;padding-left:3px;white-space:nowrap;overflow:hidden;color:#333;text-align:right;padding-right:3px;padding-left:0">32.82</div>
<div style="left:765px;top:29px;width:40px;height:28px;line-height:29.500px;border-right:1px solid #d0d1d5;padding-left:3px;white-space:nowrap;overflow:hidden;color:#333">7</div>
<div style="left:805px;top:29px;width:70px;height:28px;line-height:29.500px;border-right:1px solid #d0d1d5;padding-left:3px;white-space:nowrap;overflow:hidden;color:#333">中药</div>
<div style="left:875px;top:29px;width:40px;height:28px;line-height:29.500px;border-right:1px solid #d0d1d5;padding-left:3px;white-space:nowrap;overflow:hidden;color:#333"><div class="cb" style="left:13px;top:7px;border-color:#e3e6ee"></div></div>
<div style="left:915px;top:29px;width:40px;height:28px;line-height:29.500px;border-right:1px solid #d0d1d5;padding-left:3px;white-space:nowrap;overflow:hidden;color:#333"><div class="cb" style="left:13px;top:7px;border-color:#e3e6ee"></div></div>
<div style="left:955px;top:29px;width:60px;height:28px;line-height:29.500px;border-right:1px solid #d0d1d5;padding-left:3px;white-space:nowrap;overflow:hidden;color:#333">乙类</div>
<div style="left:1015px;top:29px;width:60px;height:28px;line-height:29.500px;border-right:1px solid #d0d1d5;padding-left:3px;white-space:nowrap;overflow:hidden;color:#333">医保</div>
<div style="left:1075px;top:29px;width:60px;height:28px;line-height:29.500px;border-right:1px solid #d0d1d5;padding-left:3px;white-space:nowrap;overflow:hidden;color:#333">已发药</div>
<div style="left:1135px;top:29px;width:120px;height:28px;line-height:29.500px;border-right:1px solid #d0d1d5;padding-left:3px;white-space:nowrap;overflow:hidden;color:#333"></div>
<div style="left:1255px;top:29px;width:60px;height:28px;line-height:29.500px;border-right:1px solid #d0d1d5;padding-left:3px;white-space:nowrap;overflow:hidden;color:#333">0</div>
<div style="left:1315px;top:29px;width:120px;height:28px;line-height:29.500px;border-right:1px solid #d0d1d5;padding-left:3px;white-space:nowrap;overflow:hidden;color:#333">1g*1000g/kg</div>
<div style="left:1435px;top:29px;width:130px;height:28px;line-height:29.500px;border-right:1px solid #d0d1d5;padding-left:3px;white-space:nowrap;overflow:hidden;color:#333;letter-spacing:-.2px">2026-01-09 11:49:03</div>
<div style="left:1565px;top:29px;width:60px;height:28px;line-height:29.500px;border-right:1px solid #d0d1d5;padding-left:3px;white-space:nowrap;overflow:hidden;color:#333">郭宝云</div>
<div style="left:1625px;top:29px;width:40px;height:28px;line-height:29.500px;border-right:1px solid #d0d1d5;padding-left:3px;white-space:nowrap;overflow:hidden;color:#333">郭宝云</div>
<div style="left:0;top:57px;width:1657px;height:28px;background:#fff2c9;border-bottom:1px solid #d0d1d5"></div>
<div style="left:0px;top:57px;width:40px;height:28px;line-height:29.500px;border-right:1px solid #d0d1d5;padding-left:3px;white-space:nowrap;overflow:hidden;color:#333"></div>
<div style="left:40px;top:57px;width:200px;height:28px;line-height:29.500px;border-right:1px solid #d0d1d5;padding-left:3px;white-space:nowrap;overflow:hidden;color:#333">桂枝</div>
<div style="left:240px;top:57px;width:25px;height:28px;line-height:29.500px;border-right:1px solid #d0d1d5;padding-left:3px;white-space:nowrap;overflow:hidden;color:#333"></div>
<div style="left:265px;top:57px;width:65px;height:28px;line-height:29.500px;border-right:1px solid #d0d1d5;padding-left:3px;white-space:nowrap;overflow:hidden;color:#333">10*g</div>
<div style="left:330px;top:57px;width:60px;height:28px;line-height:29.500px;border-right:1px solid #d0d1d5;padding-left:3px;white-space:nowrap;overflow:hidden;color:#333"></div>
<div style="left:390px;top:57px;width:35px;height:28px;line-height:29.500px;border-right:1px solid #d0d1d5;padding-left:3px;white-space:nowrap;overflow:hidden;color:#333"></div>
<div style="left:425px;top:57px;width:110px;height:28px;line-height:29.500px;border-right:1px solid #d0d1d5;padding-left:3px;white-space:nowrap;overflow:hidden;color:#333">水煎日一剂分二次服</div>
<div style="left:535px;top:57px;width:80px;height:28px;line-height:29.500px;border-right:1px solid #d0d1d5;padding-left:3px;white-space:nowrap;overflow:hidden;color:#333"></div>
<div style="left:615px;top:57px;width:40px;height:28px;line-height:29.500px;border-right:1px solid #d0d1d5;padding-left:3px;white-space:nowrap;overflow:hidden;color:#333">70</div>
<div style="left:655px;top:57px;width:40px;height:28px;line-height:29.500px;border-right:1px solid #d0d1d5;padding-left:3px;white-space:nowrap;overflow:hidden;color:#333">g</div>
<div style="left:695px;top:57px;width:70px;height:28px;line-height:29.500px;border-right:1px solid #d0d1d5;padding-left:3px;white-space:nowrap;overflow:hidden;color:#333;text-align:right;padding-right:3px;padding-left:0">0.79</div>
<div style="left:765px;top:57px;width:40px;height:28px;line-height:29.500px;border-right:1px solid #d0d1d5;padding-left:3px;white-space:nowrap;overflow:hidden;color:#333">7</div>
<div style="left:805px;top:57px;width:70px;height:28px;line-height:29.500px;border-right:1px solid #d0d1d5;padding-left:3px;white-space:nowrap;overflow:hidden;color:#333">中药</div>
<div style="left:875px;top:57px;width:40px;height:28px;line-height:29.500px;border-right:1px solid #d0d1d5;padding-left:3px;white-space:nowrap;overflow:hidden;color:#333"><div class="cb" style="left:13px;top:7px;border-color:#e3e6ee"></div></div>
<div style="left:915px;top:57px;width:40px;height:28px;line-height:29.500px;border-right:1px solid #d0d1d5;padding-left:3px;white-space:nowrap;overflow:hidden;color:#333"><div class="cb" style="left:13px;top:7px;border-color:#e3e6ee"></div></div>
<div style="left:955px;top:57px;width:60px;height:28px;line-height:29.500px;border-right:1px solid #d0d1d5;padding-left:3px;white-space:nowrap;overflow:hidden;color:#333">乙类</div>
<div style="left:1015px;top:57px;width:60px;height:28px;line-height:29.500px;border-right:1px solid #d0d1d5;padding-left:3px;white-space:nowrap;overflow:hidden;color:#333">医保</div>
<div style="left:1075px;top:57px;width:60px;height:28px;line-height:29.500px;border-right:1px solid #d0d1d5;padding-left:3px;white-space:nowrap;overflow:hidden;color:#333">已发药</div>
<div style="left:1135px;top:57px;width:120px;height:28px;line-height:29.500px;border-right:1px solid #d0d1d5;padding-left:3px;white-space:nowrap;overflow:hidden;color:#333"></div>
<div style="left:1255px;top:57px;width:60px;height:28px;line-height:29.500px;border-right:1px solid #d0d1d5;padding-left:3px;white-space:nowrap;overflow:hidden;color:#333">0</div>
<div style="left:1315px;top:57px;width:120px;height:28px;line-height:29.500px;border-right:1px solid #d0d1d5;padding-left:3px;white-space:nowrap;overflow:hidden;color:#333">1g*1000g/kg</div>
<div style="left:1435px;top:57px;width:130px;height:28px;line-height:29.500px;border-right:1px solid #d0d1d5;padding-left:3px;white-space:nowrap;overflow:hidden;color:#333;letter-spacing:-.2px">2026-01-09 11:49:03</div>
<div style="left:1565px;top:57px;width:60px;height:28px;line-height:29.500px;border-right:1px solid #d0d1d5;padding-left:3px;white-space:nowrap;overflow:hidden;color:#333">郭宝云</div>
<div style="left:1625px;top:57px;width:40px;height:28px;line-height:29.500px;border-right:1px solid #d0d1d5;padding-left:3px;white-space:nowrap;overflow:hidden;color:#333">郭宝云</div>
<div style="left:0;top:85px;width:1657px;height:28px;background:#fff2c9;border-bottom:1px solid #d0d1d5"></div>
<div style="left:0px;top:85px;width:40px;height:28px;line-height:29.500px;border-right:1px solid #d0d1d5;padding-left:3px;white-space:nowrap;overflow:hidden;color:#333"></div>
<div style="left:40px;top:85px;width:200px;height:28px;line-height:29.500px;border-right:1px solid #d0d1d5;padding-left:3px;white-space:nowrap;overflow:hidden;color:#333">茯苓</div>
<div style="left:240px;top:85px;width:25px;height:28px;line-height:29.500px;border-right:1px solid #d0d1d5;padding-left:3px;white-space:nowrap;overflow:hidden;color:#333"></div>
<div style="left:265px;top:85px;width:65px;height:28px;line-height:29.500px;border-right:1px solid #d0d1d5;padding-left:3px;white-space:nowrap;overflow:hidden;color:#333">20*g</div>
<div style="left:330px;top:85px;width:60px;height:28px;line-height:29.500px;border-right:1px solid #d0d1d5;padding-left:3px;white-space:nowrap;overflow:hidden;color:#333"></div>
<div style="left:390px;top:85px;width:35px;height:28px;line-height:29.500px;border-right:1px solid #d0d1d5;padding-left:3px;white-space:nowrap;overflow:hidden;color:#333"></div>
<div style="left:425px;top:85px;width:110px;height:28px;line-height:29.500px;border-right:1px solid #d0d1d5;padding-left:3px;white-space:nowrap;overflow:hidden;color:#333">水煎日一剂分二次服</div>
<div style="left:535px;top:85px;width:80px;height:28px;line-height:29.500px;border-right:1px solid #d0d1d5;padding-left:3px;white-space:nowrap;overflow:hidden;color:#333"></div>
<div style="left:615px;top:85px;width:40px;height:28px;line-height:29.500px;border-right:1px solid #d0d1d5;padding-left:3px;white-space:nowrap;overflow:hidden;color:#333">140</div>
<div style="left:655px;top:85px;width:40px;height:28px;line-height:29.500px;border-right:1px solid #d0d1d5;padding-left:3px;white-space:nowrap;overflow:hidden;color:#333">g</div>
<div style="left:695px;top:85px;width:70px;height:28px;line-height:29.500px;border-right:1px solid #d0d1d5;padding-left:3px;white-space:nowrap;overflow:hidden;color:#333;text-align:right;padding-right:3px;padding-left:0">6.09</div>
<div style="left:765px;top:85px;width:40px;height:28px;line-height:29.500px;border-right:1px solid #d0d1d5;padding-left:3px;white-space:nowrap;overflow:hidden;color:#333">7</div>
<div style="left:805px;top:85px;width:70px;height:28px;line-height:29.500px;border-right:1px solid #d0d1d5;padding-left:3px;white-space:nowrap;overflow:hidden;color:#333">中药</div>
<div style="left:875px;top:85px;width:40px;height:28px;line-height:29.500px;border-right:1px solid #d0d1d5;padding-left:3px;white-space:nowrap;overflow:hidden;color:#333"><div class="cb" style="left:13px;top:7px;border-color:#e3e6ee"></div></div>
<div style="left:915px;top:85px;width:40px;height:28px;line-height:29.500px;border-right:1px solid #d0d1d5;padding-left:3px;white-space:nowrap;overflow:hidden;color:#333"><div class="cb" style="left:13px;top:7px;border-color:#e3e6ee"></div></div>
<div style="left:955px;top:85px;width:60px;height:28px;line-height:29.500px;border-right:1px solid #d0d1d5;padding-left:3px;white-space:nowrap;overflow:hidden;color:#333">乙类</div>
<div style="left:1015px;top:85px;width:60px;height:28px;line-height:29.500px;border-right:1px solid #d0d1d5;padding-left:3px;white-space:nowrap;overflow:hidden;color:#333">医保</div>
<div style="left:1075px;top:85px;width:60px;height:28px;line-height:29.500px;border-right:1px solid #d0d1d5;padding-left:3px;white-space:nowrap;overflow:hidden;color:#333">已发药</div>
<div style="left:1135px;top:85px;width:120px;height:28px;line-height:29.500px;border-right:1px solid #d0d1d5;padding-left:3px;white-space:nowrap;overflow:hidden;color:#333"></div>
<div style="left:1255px;top:85px;width:60px;height:28px;line-height:29.500px;border-right:1px solid #d0d1d5;padding-left:3px;white-space:nowrap;overflow:hidden;color:#333">0</div>
<div style="left:1315px;top:85px;width:120px;height:28px;line-height:29.500px;border-right:1px solid #d0d1d5;padding-left:3px;white-space:nowrap;overflow:hidden;color:#333">1g*1000g/kg</div>
<div style="left:1435px;top:85px;width:130px;height:28px;line-height:29.500px;border-right:1px solid #d0d1d5;padding-left:3px;white-space:nowrap;overflow:hidden;color:#333;letter-spacing:-.2px">2026-01-09 11:49:03</div>
<div style="left:1565px;top:85px;width:60px;height:28px;line-height:29.500px;border-right:1px solid #d0d1d5;padding-left:3px;white-space:nowrap;overflow:hidden;color:#333">郭宝云</div>
<div style="left:1625px;top:85px;width:40px;height:28px;line-height:29.500px;border-right:1px solid #d0d1d5;padding-left:3px;white-space:nowrap;overflow:hidden;color:#333">郭宝云</div>
<div style="left:0;top:113px;width:1657px;height:28px;background:#fff2c9;border-bottom:1px solid #d0d1d5"></div>
<div style="left:0px;top:113px;width:40px;height:28px;line-height:29.500px;border-right:1px solid #d0d1d5;padding-left:3px;white-space:nowrap;overflow:hidden;color:#333"></div>
<div style="left:40px;top:113px;width:200px;height:28px;line-height:29.500px;border-right:1px solid #d0d1d5;padding-left:3px;white-space:nowrap;overflow:hidden;color:#333">龙骨</div>
<div style="left:240px;top:113px;width:25px;height:28px;line-height:29.500px;border-right:1px solid #d0d1d5;padding-left:3px;white-space:nowrap;overflow:hidden;color:#333"></div>
<div style="left:265px;top:113px;width:65px;height:28px;line-height:29.500px;border-right:1px solid #d0d1d5;padding-left:3px;white-space:nowrap;overflow:hidden;color:#333">30*g</div>
<div style="left:330px;top:113px;width:60px;height:28px;line-height:29.500px;border-right:1px solid #d0d1d5;padding-left:3px;white-space:nowrap;overflow:hidden;color:#333"></div>
<div style="left:390px;top:113px;width:35px;height:28px;line-height:29.500px;border-right:1px solid #d0d1d5;padding-left:3px;white-space:nowrap;overflow:hidden;color:#333"></div>
<div style="left:425px;top:113px;width:110px;height:28px;line-height:29.500px;border-right:1px solid #d0d1d5;padding-left:3px;white-space:nowrap;overflow:hidden;color:#333">水煎日一剂分二次服</div>
<div style="left:535px;top:113px;width:80px;height:28px;line-height:29.500px;border-right:1px solid #d0d1d5;padding-left:3px;white-space:nowrap;overflow:hidden;color:#333"></div>
<div style="left:615px;top:113px;width:40px;height:28px;line-height:29.500px;border-right:1px solid #d0d1d5;padding-left:3px;white-space:nowrap;overflow:hidden;color:#333">210</div>
<div style="left:655px;top:113px;width:40px;height:28px;line-height:29.500px;border-right:1px solid #d0d1d5;padding-left:3px;white-space:nowrap;overflow:hidden;color:#333">g</div>
<div style="left:695px;top:113px;width:70px;height:28px;line-height:29.500px;border-right:1px solid #d0d1d5;padding-left:3px;white-space:nowrap;overflow:hidden;color:#333;text-align:right;padding-right:3px;padding-left:0">152</div>
<div style="left:765px;top:113px;width:40px;height:28px;line-height:29.500px;border-right:1px solid #d0d1d5;padding-left:3px;white-space:nowrap;overflow:hidden;color:#333">7</div>
<div style="left:805px;top:113px;width:70px;height:28px;line-height:29.500px;border-right:1px solid #d0d1d5;padding-left:3px;white-space:nowrap;overflow:hidden;color:#333">中药</div>
<div style="left:875px;top:113px;width:40px;height:28px;line-height:29.500px;border-right:1px solid #d0d1d5;padding-left:3px;white-space:nowrap;overflow:hidden;color:#333"><div class="cb" style="left:13px;top:7px;border-color:#e3e6ee"></div></div>
<div style="left:915px;top:113px;width:40px;height:28px;line-height:29.500px;border-right:1px solid #d0d1d5;padding-left:3px;white-space:nowrap;overflow:hidden;color:#333"><div class="cb" style="left:13px;top:7px;border-color:#e3e6ee"></div></div>
<div style="left:955px;top:113px;width:60px;height:28px;line-height:29.500px;border-right:1px solid #d0d1d5;padding-left:3px;white-space:nowrap;overflow:hidden;color:#333">乙类</div>
<div style="left:1015px;top:113px;width:60px;height:28px;line-height:29.500px;border-right:1px solid #d0d1d5;padding-left:3px;white-space:nowrap;overflow:hidden;color:#333">医保</div>
<div style="left:1075px;top:113px;width:60px;height:28px;line-height:29.500px;border-right:1px solid #d0d1d5;padding-left:3px;white-space:nowrap;overflow:hidden;color:#333">已发药</div>
<div style="left:1135px;top:113px;width:120px;height:28px;line-height:29.500px;border-right:1px solid #d0d1d5;padding-left:3px;white-space:nowrap;overflow:hidden;color:#333"></div>
<div style="left:1255px;top:113px;width:60px;height:28px;line-height:29.500px;border-right:1px solid #d0d1d5;padding-left:3px;white-space:nowrap;overflow:hidden;color:#333">0</div>
<div style="left:1315px;top:113px;width:120px;height:28px;line-height:29.500px;border-right:1px solid #d0d1d5;padding-left:3px;white-space:nowrap;overflow:hidden;color:#333">1g*1000g/kg</div>
<div style="left:1435px;top:113px;width:130px;height:28px;line-height:29.500px;border-right:1px solid #d0d1d5;padding-left:3px;white-space:nowrap;overflow:hidden;color:#333;letter-spacing:-.2px">2026-01-09 11:49:03</div>
<div style="left:1565px;top:113px;width:60px;height:28px;line-height:29.500px;border-right:1px solid #d0d1d5;padding-left:3px;white-space:nowrap;overflow:hidden;color:#333">郭宝云</div>
<div style="left:1625px;top:113px;width:40px;height:28px;line-height:29.500px;border-right:1px solid #d0d1d5;padding-left:3px;white-space:nowrap;overflow:hidden;color:#333">郭宝云</div>
<div style="left:0;top:141px;width:1657px;height:28px;background:#fff2c9;border-bottom:1px solid #d0d1d5"></div>
<div style="left:0px;top:141px;width:40px;height:28px;line-height:29.500px;border-right:1px solid #d0d1d5;padding-left:3px;white-space:nowrap;overflow:hidden;color:#333"></div>
<div style="left:40px;top:141px;width:200px;height:28px;line-height:29.500px;border-right:1px solid #d0d1d5;padding-left:3px;white-space:nowrap;overflow:hidden;color:#333">牡蛎</div>
<div style="left:240px;top:141px;width:25px;height:28px;line-height:29.500px;border-right:1px solid #d0d1d5;padding-left:3px;white-space:nowrap;overflow:hidden;color:#333"></div>
<div style="left:265px;top:141px;width:65px;height:28px;line-height:29.500px;border-right:1px solid #d0d1d5;padding-left:3px;white-space:nowrap;overflow:hidden;color:#333">30*g</div>
<div style="left:330px;top:141px;width:60px;height:28px;line-height:29.500px;border-right:1px solid #d0d1d5;padding-left:3px;white-space:nowrap;overflow:hidden;color:#333"></div>
<div style="left:390px;top:141px;width:35px;height:28px;line-height:29.500px;border-right:1px solid #d0d1d5;padding-left:3px;white-space:nowrap;overflow:hidden;color:#333"></div>
<div style="left:425px;top:141px;width:110px;height:28px;line-height:29.500px;border-right:1px solid #d0d1d5;padding-left:3px;white-space:nowrap;overflow:hidden;color:#333">水煎日一剂分二次服</div>
<div style="left:535px;top:141px;width:80px;height:28px;line-height:29.500px;border-right:1px solid #d0d1d5;padding-left:3px;white-space:nowrap;overflow:hidden;color:#333"></div>
<div style="left:615px;top:141px;width:40px;height:28px;line-height:29.500px;border-right:1px solid #d0d1d5;padding-left:3px;white-space:nowrap;overflow:hidden;color:#333">210</div>
<div style="left:655px;top:141px;width:40px;height:28px;line-height:29.500px;border-right:1px solid #d0d1d5;padding-left:3px;white-space:nowrap;overflow:hidden;color:#333">g</div>
<div style="left:695px;top:141px;width:70px;height:28px;line-height:29.500px;border-right:1px solid #d0d1d5;padding-left:3px;white-space:nowrap;overflow:hidden;color:#333;text-align:right;padding-right:3px;padding-left:0">3.95</div>
<div style="left:765px;top:141px;width:40px;height:28px;line-height:29.500px;border-right:1px solid #d0d1d5;padding-left:3px;white-space:nowrap;overflow:hidden;color:#333">7</div>
<div style="left:805px;top:141px;width:70px;height:28px;line-height:29.500px;border-right:1px solid #d0d1d5;padding-left:3px;white-space:nowrap;overflow:hidden;color:#333">中药</div>
<div style="left:875px;top:141px;width:40px;height:28px;line-height:29.500px;border-right:1px solid #d0d1d5;padding-left:3px;white-space:nowrap;overflow:hidden;color:#333"><div class="cb" style="left:13px;top:7px;border-color:#e3e6ee"></div></div>
<div style="left:915px;top:141px;width:40px;height:28px;line-height:29.500px;border-right:1px solid #d0d1d5;padding-left:3px;white-space:nowrap;overflow:hidden;color:#333"><div class="cb" style="left:13px;top:7px;border-color:#e3e6ee"></div></div>
<div style="left:955px;top:141px;width:60px;height:28px;line-height:29.500px;border-right:1px solid #d0d1d5;padding-left:3px;white-space:nowrap;overflow:hidden;color:#333">乙类</div>
<div style="left:1015px;top:141px;width:60px;height:28px;line-height:29.500px;border-right:1px solid #d0d1d5;padding-left:3px;white-space:nowrap;overflow:hidden;color:#333">医保</div>
<div style="left:1075px;top:141px;width:60px;height:28px;line-height:29.500px;border-right:1px solid #d0d1d5;padding-left:3px;white-space:nowrap;overflow:hidden;color:#333">已发药</div>
<div style="left:1135px;top:141px;width:120px;height:28px;line-height:29.500px;border-right:1px solid #d0d1d5;padding-left:3px;white-space:nowrap;overflow:hidden;color:#333"></div>
<div style="left:1255px;top:141px;width:60px;height:28px;line-height:29.500px;border-right:1px solid #d0d1d5;padding-left:3px;white-space:nowrap;overflow:hidden;color:#333">0</div>
<div style="left:1315px;top:141px;width:120px;height:28px;line-height:29.500px;border-right:1px solid #d0d1d5;padding-left:3px;white-space:nowrap;overflow:hidden;color:#333">1g*1000g/kg</div>
<div style="left:1435px;top:141px;width:130px;height:28px;line-height:29.500px;border-right:1px solid #d0d1d5;padding-left:3px;white-space:nowrap;overflow:hidden;color:#333;letter-spacing:-.2px">2026-01-09 11:49:03</div>
<div style="left:1565px;top:141px;width:60px;height:28px;line-height:29.500px;border-right:1px solid #d0d1d5;padding-left:3px;white-space:nowrap;overflow:hidden;color:#333">郭宝云</div>
<div style="left:1625px;top:141px;width:40px;height:28px;line-height:29.500px;border-right:1px solid #d0d1d5;padding-left:3px;white-space:nowrap;overflow:hidden;color:#333">郭宝云</div>
<div style="left:0;top:169px;width:1657px;height:28px;background:#fff2c9;border-bottom:1px solid #d0d1d5"></div>
<div style="left:0px;top:169px;width:40px;height:28px;line-height:29.500px;border-right:1px solid #d0d1d5;padding-left:3px;white-space:nowrap;overflow:hidden;color:#333"></div>
<div style="left:40px;top:169px;width:200px;height:28px;line-height:29.500px;border-right:1px solid #d0d1d5;padding-left:3px;white-space:nowrap;overflow:hidden;color:#333">黄芪</div>
<div style="left:240px;top:169px;width:25px;height:28px;line-height:29.500px;border-right:1px solid #d0d1d5;padding-left:3px;white-space:nowrap;overflow:hidden;color:#333"></div>
<div style="left:265px;top:169px;width:65px;height:28px;line-height:29.500px;border-right:1px solid #d0d1d5;padding-left:3px;white-space:nowrap;overflow:hidden;color:#333">10*g</div>
<div style="left:330px;top:169px;width:60px;height:28px;line-height:29.500px;border-right:1px solid #d0d1d5;padding-left:3px;white-space:nowrap;overflow:hidden;color:#333"></div>
<div style="left:390px;top:169px;width:35px;height:28px;line-height:29.500px;border-right:1px solid #d0d1d5;padding-left:3px;white-space:nowrap;overflow:hidden;color:#333"></div>
<div style="left:425px;top:169px;width:110px;height:28px;line-height:29.500px;border-right:1px solid #d0d1d5;padding-left:3px;white-space:nowrap;overflow:hidden;color:#333">水煎日一剂分二次服</div>
<div style="left:535px;top:169px;width:80px;height:28px;line-height:29.500px;border-right:1px solid #d0d1d5;padding-left:3px;white-space:nowrap;overflow:hidden;color:#333"></div>
<div style="left:615px;top:169px;width:40px;height:28px;line-height:29.500px;border-right:1px solid #d0d1d5;padding-left:3px;white-space:nowrap;overflow:hidden;color:#333">70</div>
<div style="left:655px;top:169px;width:40px;height:28px;line-height:29.500px;border-right:1px solid #d0d1d5;padding-left:3px;white-space:nowrap;overflow:hidden;color:#333">g</div>
<div style="left:695px;top:169px;width:70px;height:28px;line-height:29.500px;border-right:1px solid #d0d1d5;padding-left:3px;white-space:nowrap;overflow:hidden;color:#333;text-align:right;padding-right:3px;padding-left:0">4.08</div>
<div style="left:765px;top:169px;width:40px;height:28px;line-height:29.500px;border-right:1px solid #d0d1d5;padding-left:3px;white-space:nowrap;overflow:hidden;color:#333">7</div>
<div style="left:805px;top:169px;width:70px;height:28px;line-height:29.500px;border-right:1px solid #d0d1d5;padding-left:3px;white-space:nowrap;overflow:hidden;color:#333">中药</div>
<div style="left:875px;top:169px;width:40px;height:28px;line-height:29.500px;border-right:1px solid #d0d1d5;padding-left:3px;white-space:nowrap;overflow:hidden;color:#333"><div class="cb" style="left:13px;top:7px;border-color:#e3e6ee"></div></div>
<div style="left:915px;top:169px;width:40px;height:28px;line-height:29.500px;border-right:1px solid #d0d1d5;padding-left:3px;white-space:nowrap;overflow:hidden;color:#333"><div class="cb" style="left:13px;top:7px;border-color:#e3e6ee"></div></div>
<div style="left:955px;top:169px;width:60px;height:28px;line-height:29.500px;border-right:1px solid #d0d1d5;padding-left:3px;white-space:nowrap;overflow:hidden;color:#333">乙类</div>
<div style="left:1015px;top:169px;width:60px;height:28px;line-height:29.500px;border-right:1px solid #d0d1d5;padding-left:3px;white-space:nowrap;overflow:hidden;color:#333">医保</div>
<div style="left:1075px;top:169px;width:60px;height:28px;line-height:29.500px;border-right:1px solid #d0d1d5;padding-left:3px;white-space:nowrap;overflow:hidden;color:#333">已发药</div>
<div style="left:1135px;top:169px;width:120px;height:28px;line-height:29.500px;border-right:1px solid #d0d1d5;padding-left:3px;white-space:nowrap;overflow:hidden;color:#333"></div>
<div style="left:1255px;top:169px;width:60px;height:28px;line-height:29.500px;border-right:1px solid #d0d1d5;padding-left:3px;white-space:nowrap;overflow:hidden;color:#333">0</div>
<div style="left:1315px;top:169px;width:120px;height:28px;line-height:29.500px;border-right:1px solid #d0d1d5;padding-left:3px;white-space:nowrap;overflow:hidden;color:#333">1g*1000g/kg</div>
<div style="left:1435px;top:169px;width:130px;height:28px;line-height:29.500px;border-right:1px solid #d0d1d5;padding-left:3px;white-space:nowrap;overflow:hidden;color:#333;letter-spacing:-.2px">2026-01-09 11:49:03</div>
<div style="left:1565px;top:169px;width:60px;height:28px;line-height:29.500px;border-right:1px solid #d0d1d5;padding-left:3px;white-space:nowrap;overflow:hidden;color:#333">郭宝云</div>
<div style="left:1625px;top:169px;width:40px;height:28px;line-height:29.500px;border-right:1px solid #d0d1d5;padding-left:3px;white-space:nowrap;overflow:hidden;color:#333">郭宝云</div>
<div style="left:0;top:197px;width:1657px;height:28px;background:#fff2c9;border-bottom:1px solid #d0d1d5"></div>
<div style="left:0px;top:197px;width:40px;height:28px;line-height:29.500px;border-right:1px solid #d0d1d5;padding-left:3px;white-space:nowrap;overflow:hidden;color:#333"></div>
<div style="left:40px;top:197px;width:200px;height:28px;line-height:29.500px;border-right:1px solid #d0d1d5;padding-left:3px;white-space:nowrap;overflow:hidden;color:#333">五味子（北）</div>
<div style="left:240px;top:197px;width:25px;height:28px;line-height:29.500px;border-right:1px solid #d0d1d5;padding-left:3px;white-space:nowrap;overflow:hidden;color:#333"></div>
<div style="left:265px;top:197px;width:65px;height:28px;line-height:29.500px;border-right:1px solid #d0d1d5;padding-left:3px;white-space:nowrap;overflow:hidden;color:#333">10*g</div>
<div style="left:330px;top:197px;width:60px;height:28px;line-height:29.500px;border-right:1px solid #d0d1d5;padding-left:3px;white-space:nowrap;overflow:hidden;color:#333"></div>
<div style="left:390px;top:197px;width:35px;height:28px;line-height:29.500px;border-right:1px solid #d0d1d5;padding-left:3px;white-space:nowrap;overflow:hidden;color:#333"></div>
<div style="left:425px;top:197px;width:110px;height:28px;line-height:29.500px;border-right:1px solid #d0d1d5;padding-left:3px;white-space:nowrap;overflow:hidden;color:#333">水煎日一剂分二次服</div>
<div style="left:535px;top:197px;width:80px;height:28px;line-height:29.500px;border-right:1px solid #d0d1d5;padding-left:3px;white-space:nowrap;overflow:hidden;color:#333"></div>
<div style="left:615px;top:197px;width:40px;height:28px;line-height:29.500px;border-right:1px solid #d0d1d5;padding-left:3px;white-space:nowrap;overflow:hidden;color:#333">70</div>
<div style="left:655px;top:197px;width:40px;height:28px;line-height:29.500px;border-right:1px solid #d0d1d5;padding-left:3px;white-space:nowrap;overflow:hidden;color:#333">g</div>
<div style="left:695px;top:197px;width:70px;height:28px;line-height:29.500px;border-right:1px solid #d0d1d5;padding-left:3px;white-space:nowrap;overflow:hidden;color:#333;text-align:right;padding-right:3px;padding-left:0">17.33</div>
<div style="left:765px;top:197px;width:40px;height:28px;line-height:29.500px;border-right:1px solid #d0d1d5;padding-left:3px;white-space:nowrap;overflow:hidden;color:#333">7</div>
<div style="left:805px;top:197px;width:70px;height:28px;line-height:29.500px;border-right:1px solid #d0d1d5;padding-left:3px;white-space:nowrap;overflow:hidden;color:#333">中药</div>
<div style="left:875px;top:197px;width:40px;height:28px;line-height:29.500px;border-right:1px solid #d0d1d5;padding-left:3px;white-space:nowrap;overflow:hidden;color:#333"><div class="cb" style="left:13px;top:7px;border-color:#e3e6ee"></div></div>
<div style="left:915px;top:197px;width:40px;height:28px;line-height:29.500px;border-right:1px solid #d0d1d5;padding-left:3px;white-space:nowrap;overflow:hidden;color:#333"><div class="cb" style="left:13px;top:7px;border-color:#e3e6ee"></div></div>
<div style="left:955px;top:197px;width:60px;height:28px;line-height:29.500px;border-right:1px solid #d0d1d5;padding-left:3px;white-space:nowrap;overflow:hidden;color:#333">乙类</div>
<div style="left:1015px;top:197px;width:60px;height:28px;line-height:29.500px;border-right:1px solid #d0d1d5;padding-left:3px;white-space:nowrap;overflow:hidden;color:#333">医保</div>
<div style="left:1075px;top:197px;width:60px;height:28px;line-height:29.500px;border-right:1px solid #d0d1d5;padding-left:3px;white-space:nowrap;overflow:hidden;color:#333">已发药</div>
<div style="left:1135px;top:197px;width:120px;height:28px;line-height:29.500px;border-right:1px solid #d0d1d5;padding-left:3px;white-space:nowrap;overflow:hidden;color:#333"></div>
<div style="left:1255px;top:197px;width:60px;height:28px;line-height:29.500px;border-right:1px solid #d0d1d5;padding-left:3px;white-space:nowrap;overflow:hidden;color:#333">0</div>
<div style="left:1315px;top:197px;width:120px;height:28px;line-height:29.500px;border-right:1px solid #d0d1d5;padding-left:3px;white-space:nowrap;overflow:hidden;color:#333">1g*1000g/kg</div>
<div style="left:1435px;top:197px;width:130px;height:28px;line-height:29.500px;border-right:1px solid #d0d1d5;padding-left:3px;white-space:nowrap;overflow:hidden;color:#333;letter-spacing:-.2px">2026-01-09 11:49:03</div>
<div style="left:1565px;top:197px;width:60px;height:28px;line-height:29.500px;border-right:1px solid #d0d1d5;padding-left:3px;white-space:nowrap;overflow:hidden;color:#333">郭宝云</div>
<div style="left:1625px;top:197px;width:40px;height:28px;line-height:29.500px;border-right:1px solid #d0d1d5;padding-left:3px;white-space:nowrap;overflow:hidden;color:#333">郭宝云</div>
<div style="left:0;top:225px;width:1657px;height:28px;background:#fff2c9;border-bottom:1px solid #d0d1d5"></div>
<div style="left:0px;top:225px;width:40px;height:28px;line-height:29.500px;border-right:1px solid #d0d1d5;padding-left:3px;white-space:nowrap;overflow:hidden;color:#333"></div>
<div style="left:40px;top:225px;width:200px;height:28px;line-height:29.500px;border-right:1px solid #d0d1d5;padding-left:3px;white-space:nowrap;overflow:hidden;color:#333">炒酸枣仁</div>
<div style="left:240px;top:225px;width:25px;height:28px;line-height:29.500px;border-right:1px solid #d0d1d5;padding-left:3px;white-space:nowrap;overflow:hidden;color:#333"></div>
<div style="left:265px;top:225px;width:65px;height:28px;line-height:29.500px;border-right:1px solid #d0d1d5;padding-left:3px;white-space:nowrap;overflow:hidden;color:#333">15*g</div>
<div style="left:330px;top:225px;width:60px;height:28px;line-height:29.500px;border-right:1px solid #d0d1d5;padding-left:3px;white-space:nowrap;overflow:hidden;color:#333"></div>
<div style="left:390px;top:225px;width:35px;height:28px;line-height:29.500px;border-right:1px solid #d0d1d5;padding-left:3px;white-space:nowrap;overflow:hidden;color:#333"></div>
<div style="left:425px;top:225px;width:110px;height:28px;line-height:29.500px;border-right:1px solid #d0d1d5;padding-left:3px;white-space:nowrap;overflow:hidden;color:#333">水煎日一剂分二次服</div>
<div style="left:535px;top:225px;width:80px;height:28px;line-height:29.500px;border-right:1px solid #d0d1d5;padding-left:3px;white-space:nowrap;overflow:hidden;color:#333">另包</div>
<div style="left:615px;top:225px;width:40px;height:28px;line-height:29.500px;border-right:1px solid #d0d1d5;padding-left:3px;white-space:nowrap;overflow:hidden;color:#333">105</div>
<div style="left:655px;top:225px;width:40px;height:28px;line-height:29.500px;border-right:1px solid #d0d1d5;padding-left:3px;white-space:nowrap;overflow:hidden;color:#333">g</div>
<div style="left:695px;top:225px;width:70px;height:28px;line-height:29.500px;border-right:1px solid #d0d1d5;padding-left:3px;white-space:nowrap;overflow:hidden;color:#333;text-align:right;padding-right:3px;padding-left:0">127.05</div>
<div style="left:765px;top:225px;width:40px;height:28px;line-height:29.500px;border-right:1px solid #d0d1d5;padding-left:3px;white-space:nowrap;overflow:hidden;color:#333">7</div>
<div style="left:805px;top:225px;width:70px;height:28px;line-height:29.500px;border-right:1px solid #d0d1d5;padding-left:3px;white-space:nowrap;overflow:hidden;color:#333">中药</div>
<div style="left:875px;top:225px;width:40px;height:28px;line-height:29.500px;border-right:1px solid #d0d1d5;padding-left:3px;white-space:nowrap;overflow:hidden;color:#333"><div class="cb" style="left:13px;top:7px;border-color:#e3e6ee"></div></div>
<div style="left:915px;top:225px;width:40px;height:28px;line-height:29.500px;border-right:1px solid #d0d1d5;padding-left:3px;white-space:nowrap;overflow:hidden;color:#333"><div class="cb" style="left:13px;top:7px;border-color:#e3e6ee"></div></div>
<div style="left:955px;top:225px;width:60px;height:28px;line-height:29.500px;border-right:1px solid #d0d1d5;padding-left:3px;white-space:nowrap;overflow:hidden;color:#333">乙类</div>
<div style="left:1015px;top:225px;width:60px;height:28px;line-height:29.500px;border-right:1px solid #d0d1d5;padding-left:3px;white-space:nowrap;overflow:hidden;color:#333">医保</div>
<div style="left:1075px;top:225px;width:60px;height:28px;line-height:29.500px;border-right:1px solid #d0d1d5;padding-left:3px;white-space:nowrap;overflow:hidden;color:#333">已发药</div>
<div style="left:1135px;top:225px;width:120px;height:28px;line-height:29.500px;border-right:1px solid #d0d1d5;padding-left:3px;white-space:nowrap;overflow:hidden;color:#333"></div>
<div style="left:1255px;top:225px;width:60px;height:28px;line-height:29.500px;border-right:1px solid #d0d1d5;padding-left:3px;white-space:nowrap;overflow:hidden;color:#333">0</div>
<div style="left:1315px;top:225px;width:120px;height:28px;line-height:29.500px;border-right:1px solid #d0d1d5;padding-left:3px;white-space:nowrap;overflow:hidden;color:#333">1g*1000g/kg</div>
<div style="left:1435px;top:225px;width:130px;height:28px;line-height:29.500px;border-right:1px solid #d0d1d5;padding-left:3px;white-space:nowrap;overflow:hidden;color:#333;letter-spacing:-.2px">2026-01-09 11:49:03</div>
<div style="left:1565px;top:225px;width:60px;height:28px;line-height:29.500px;border-right:1px solid #d0d1d5;padding-left:3px;white-space:nowrap;overflow:hidden;color:#333">郭宝云</div>
<div style="left:1625px;top:225px;width:40px;height:28px;line-height:29.500px;border-right:1px solid #d0d1d5;padding-left:3px;white-space:nowrap;overflow:hidden;color:#333">郭宝云</div>
</div>
<div style="left:198px;top:259px;width:1px;height:238px;background:#d0d3da"></div>
<div style="left:1862px;top:259px;width:1px;height:273px;background:#d4d7de"></div>
<div style="left:1856px;top:288px;width:7px;height:208px;background:#fff"></div>
<div style="left:1856px;top:289px;width:7px;height:96px;background:#c3c3c3;border-radius:3px"></div>
<div style="left:199px;top:496px;width:1663px;height:28px;background:#fff"></div>
<div class="t" style="left:211px;top:499px;height:25px;line-height:25px;font-size:12px;color:#858585;letter-spacing:0.301px">合计:472.88&nbsp;&nbsp;&nbsp;其中药品:469.68&nbsp;&nbsp;&nbsp;非药品:3.20</div>
<div style="left:199px;top:523px;width:1663px;height:9px;background:#fff;border-top:1px solid #d2d2d2;border-bottom:1px solid #cacaca"></div>
<div style="left:198px;top:523px;width:1077px;height:9px;background:#c1c1c1;border-radius:0 4px 4px 0"></div>
<div style="left:193px;top:532px;width:1675px;height:5px;background:#e6e6e6"></div>
<div style="left:193px;top:537px;width:1267px;height:413px;background:#fff;border:1px solid #e3e6ec;border-top:none"></div>
<svg style="left:213px;top:547px" width="60" height="13" viewBox="0 0 60 13"><path d="M9.500 1v11L1.500 6.500zM18 1v11L10 6.500zM41.500 1v11l8-5.500zM50 1v11l8-5.500z" fill="#4e7ecb"/></svg>
<div class="t" style="left:298px;top:542px;height:22px;line-height:22px;font-size:13px;color:#f0483e">*</div>
<div class="t" style="left:304px;top:543px;height:22px;line-height:22px;font-size:14px;color:#222">用法</div>
<div style="left:336px;top:542px;width:89px;height:24px;border:1px solid #dcdfe6;border-radius:3px;background:#fff"></div>
<div class="t" style="left:344px;top:542px;height:24px;line-height:24px;font-size:13px;color:#444">水煎日一剂分</div>
<div class="t" style="left:441px;top:543px;height:22px;line-height:22px;font-size:14px;color:#555">每日</div>
<div style="left:474px;top:542px;width:79px;height:24px;border:1px solid #dcdfe6;border-radius:3px;background:#fff"></div>
<div class="t" style="left:482px;top:542px;height:24px;line-height:24px;font-size:13px;color:#444">2</div>
<svg style="left:536px;top:551px" width="10" height="7" viewBox="0 0 10 7"><path d="M.5.500L5 5.500 9.500.500" stroke="#c0c4cc" stroke-width="1" fill="none"/></svg>
<div class="t" style="left:555px;top:543px;height:22px;line-height:22px;font-size:14px;color:#555">次</div>
<div class="t" style="left:583px;top:542px;height:22px;line-height:22px;font-size:13px;color:#f0483e">*</div>
<div class="t" style="left:588px;top:543px;height:22px;line-height:22px;font-size:14px;color:#222">贴数</div>
<div style="left:622px;top:542px;width:60px;height:24px;border:1px solid #dcdfe6;border-radius:3px;background:#fff"></div>
<div class="t" style="left:630px;top:542px;height:24px;line-height:24px;font-size:13px;color:#444"></div>
<div class="t" style="left:635px;top:542px;height:24px;line-height:24px;font-size:13px;color:#444">7</div>
<div style="left:660px;top:543px;width:21px;height:22px;border-left:1px solid #dcdfe6;background:#fff"></div>
<div style="left:660px;top:554px;width:21px;height:1px;background:#e4e7ed"></div>
<svg style="left:665px;top:545px" width="11" height="19" viewBox="0 0 11 19"><path d="M1.500 5.500L5.500 1.500 9.500 5.500M1.500 13.500L5.500 17.500 9.500 13.500" stroke="#8f949c" stroke-width="1" fill="none"/></svg>
<div class="t" style="left:684px;top:543px;height:22px;line-height:22px;font-size:14px;color:#555">剂</div>
<div class="t" style="left:711px;top:542px;height:22px;line-height:22px;font-size:13px;color:#f0483e">*</div>
<div class="t" style="left:716px;top:543px;height:22px;line-height:22px;font-size:14px;color:#222">煎药方式:</div>
<div style="left:781px;top:542px;width:119px;height:24px;border:1px solid #dcdfe6;border-radius:3px;background:#fff"></div>
<div class="t" style="left:789px;top:542px;height:24px;line-height:24px;font-size:13px;color:#444">回家自煎</div>
<svg style="left:883px;top:551px" width="10" height="7" viewBox="0 0 10 7"><path d="M.5.500L5 5.500 9.500.500" stroke="#c0c4cc" stroke-width="1" fill="none"/></svg>
<div class="t" style="left:916px;top:543px;height:22px;line-height:22px;font-size:14px;color:#555">煎法</div>
<div style="left:949px;top:542px;width:119px;height:24px;border:1px solid #dcdfe6;border-radius:3px;background:#fff"></div>
<div class="t" style="left:957px;top:542px;height:24px;line-height:24px;font-size:13px;color:#444">水煎</div>
<svg style="left:1051px;top:551px" width="10" height="7" viewBox="0 0 10 7"><path d="M.5.500L5 5.500 9.500.500" stroke="#c0c4cc" stroke-width="1" fill="none"/></svg>
<div class="t" style="left:1084px;top:543px;height:22px;line-height:22px;font-size:14px;color:#555">药房</div>
<div style="left:1117px;top:542px;width:99px;height:24px;border:1px solid #dcdfe6;border-radius:3px;background:#fff"></div>
<div class="t" style="left:1125px;top:542px;height:24px;line-height:24px;font-size:13px;color:#444">中药房</div>
<svg style="left:1199px;top:551px" width="10" height="7" viewBox="0 0 10 7"><path d="M.5.500L5 5.500 9.500.500" stroke="#c0c4cc" stroke-width="1" fill="none"/></svg>
<div class="t" style="left:1232px;top:543px;height:22px;line-height:22px;font-size:14px;color:#555">特殊病种</div>
<div style="left:1293px;top:542px;width:119px;height:24px;border:1px solid #dcdfe6;border-radius:3px;background:#fff"></div>
<div class="t" style="left:1301px;top:542px;height:24px;line-height:24px;font-size:13px;color:#444"></div>
<div class="t" style="left:203px;top:571px;height:22px;line-height:22px;font-size:13px;color:#f0483e">*</div>
<div class="t" style="left:209px;top:572px;height:22px;line-height:22px;font-size:14px;color:#222">煎服法说明</div>
<div style="left:283px;top:571px;width:119px;height:24px;border:1px solid #dcdfe6;border-radius:3px;background:#fff"></div>
<div class="t" style="left:291px;top:571px;height:24px;line-height:24px;font-size:13px;color:#444">饮用水 500ml 煎 1</div>
<div style="left:418px;top:577px;width:13px;height:13px;border:1px solid #dcdfe6;border-radius:2px;background:#fff"></div>
<div class="t" style="left:437px;top:572px;height:22px;line-height:22px;font-size:13px;color:#333">急煎</div>
<div style="left:198px;top:600px;width:1262px;height:348px;background:#fff;border:1px solid #d4d7de"></div>
<div style="left:199px;top:601px;width:1260px;height:318px;overflow:hidden">
<div style="left:0;top:0;width:1260px;height:29px;background:#f5f7fb;border-bottom:1px solid #d0d1d5"></div>
<div style="left:0px;top:0;width:322px;height:29px;line-height:28px;border-right:1px solid #d0d1d5;padding-left:2px;white-space:nowrap;overflow:hidden;color:#333">药品名称</div>
<div style="left:322px;top:0;width:80px;height:29px;line-height:28px;border-right:1px solid #d0d1d5;padding-left:3px;white-space:nowrap;overflow:hidden;color:#333">规格</div>
<div style="left:402px;top:0;width:60px;height:29px;line-height:28px;border-right:1px solid #d0d1d5;padding-left:3px;white-space:nowrap;overflow:hidden;color:#333">次量</div>
<div style="left:462px;top:0;width:60px;height:29px;line-height:28px;border-right:1px solid #d0d1d5;padding-left:3px;white-space:nowrap;overflow:hidden;color:#333">单位</div>
<div style="left:522px;top:0;width:60px;height:29px;line-height:28px;border-right:1px solid #d0d1d5;padding-left:3px;white-space:nowrap;overflow:hidden;color:#333">总量</div>
<div style="left:582px;top:0;width:60px;height:29px;line-height:28px;border-right:1px solid #d0d1d5;padding-left:3px;white-space:nowrap;overflow:hidden;color:#333">单位</div>
<div style="left:642px;top:0;width:60px;height:29px;line-height:28px;border-right:1px solid #d0d1d5;padding-left:3px;white-space:nowrap;overflow:hidden;color:#333">细目用法</div>
<div style="left:702px;top:0;width:70px;height:29px;line-height:28px;border-right:1px solid #d0d1d5;padding-left:3px;text-align:right;padding-right:2px;padding-left:0;white-space:nowrap;overflow:hidden;color:#333">单价</div>
<div style="left:772px;top:0;width:45px;height:29px;line-height:28px;border-right:1px solid #d0d1d5;padding-left:3px;text-align:center;padding-left:0;white-space:nowrap;overflow:hidden;color:#333">自备</div>
<div style="left:817px;top:0;width:45px;height:29px;line-height:28px;border-right:1px solid #d0d1d5;padding-left:3px;text-align:center;padding-left:0;white-space:nowrap;overflow:hidden;color:#333">自费</div>
<div style="left:862px;top:0;width:70px;height:29px;line-height:28px;border-right:1px solid #d0d1d5;padding-left:3px;white-space:nowrap;overflow:hidden;color:#333">医保类别</div>
<div style="left:932px;top:0;width:70px;height:29px;line-height:28px;border-right:1px solid #d0d1d5;padding-left:3px;white-space:nowrap;overflow:hidden;color:#333">自付</div>
<div style="left:1002px;top:0;width:110px;height:29px;line-height:28px;border-right:1px solid #d0d1d5;padding-left:3px;white-space:nowrap;overflow:hidden;color:#333">嘱咐</div>
<div style="left:1112px;top:0;width:70px;height:29px;line-height:28px;border-right:1px solid #d0d1d5;padding-left:3px;white-space:nowrap;overflow:hidden;color:#333">退回原因</div>
<div style="left:1182px;top:0;width:70px;height:29px;line-height:28px;border-right:1px solid #d0d1d5;padding-left:3px;white-space:nowrap;overflow:hidden;color:#333">退回说明</div>
<div style="left:0;top:29px;width:1252px;height:28px;background:#fff;border-bottom:1px solid #d0d1d5"></div>
<div style="left:0px;top:29px;width:322px;height:28px;line-height:28px;border-right:1px solid #d0d1d5;padding-left:2px;white-space:nowrap;overflow:hidden;color:#1f1f1f;font-weight:bold">北柴胡<div class="tri" style="right:0;bottom:0"></div></div>
<div style="left:322px;top:29px;width:80px;height:28px;line-height:28px;border-right:1px solid #d0d1d5;padding-left:3px;white-space:nowrap;overflow:hidden;color:#1f1f1f;font-weight:bold;letter-spacing:.3px">1g*1000g/kg</div>
<div style="left:402px;top:29px;width:60px;height:28px;line-height:28px;border-right:1px solid #d0d1d5;padding-left:3px;white-space:nowrap;overflow:hidden;color:#1f1f1f;font-weight:bold">10<div class="tri" style="right:0;bottom:0"></div></div>
<div style="left:462px;top:29px;width:60px;height:28px;line-height:28px;border-right:1px solid #d0d1d5;padding-left:3px;white-space:nowrap;overflow:hidden;color:#1f1f1f;font-weight:bold">g</div>
<div style="left:522px;top:29px;width:60px;height:28px;line-height:28px;border-right:1px solid #d0d1d5;padding-left:3px;white-space:nowrap;overflow:hidden;color:#1f1f1f;font-weight:bold">70</div>
<div style="left:582px;top:29px;width:60px;height:28px;line-height:28px;border-right:1px solid #d0d1d5;padding-left:3px;white-space:nowrap;overflow:hidden;color:#1f1f1f;font-weight:bold">g</div>
<div style="left:642px;top:29px;width:60px;height:28px;line-height:28px;border-right:1px solid #d0d1d5;padding-left:3px;white-space:nowrap;overflow:hidden;color:#1f1f1f;font-weight:bold;"><div class="tri" style="right:0;bottom:0"></div></div>
<div style="left:702px;top:29px;width:70px;height:28px;line-height:28px;border-right:1px solid #d0d1d5;padding-left:3px;white-space:nowrap;overflow:hidden;color:#1f1f1f;font-weight:bold;text-align:right;padding-right:2px;padding-left:0">0.47</div>
<div style="left:772px;top:29px;width:45px;height:28px;line-height:28px;border-right:1px solid #d0d1d5;padding-left:3px;white-space:nowrap;overflow:hidden;color:#1f1f1f;font-weight:bold"><div class="cb" style="left:16px;top:7px;border-color:#dfe2ea"></div><div class="tri" style="right:0;bottom:0"></div></div>
<div style="left:817px;top:29px;width:45px;height:28px;line-height:28px;border-right:1px solid #d0d1d5;padding-left:3px;white-space:nowrap;overflow:hidden;color:#1f1f1f;font-weight:bold"><div class="cb" style="left:16px;top:7px;border-color:#dfe2ea"></div><div class="tri" style="right:0;bottom:0"></div></div>
<div style="left:862px;top:29px;width:70px;height:28px;line-height:28px;border-right:1px solid #d0d1d5;padding-left:3px;white-space:nowrap;overflow:hidden;color:#1f1f1f;font-weight:bold">乙类</div>
<div style="left:932px;top:29px;width:70px;height:28px;line-height:28px;border-right:1px solid #d0d1d5;padding-left:3px;white-space:nowrap;overflow:hidden;color:#1f1f1f;font-weight:bold">0%</div>
<div style="left:1002px;top:29px;width:110px;height:28px;line-height:28px;border-right:1px solid #d0d1d5;padding-left:3px;white-space:nowrap;overflow:hidden;color:#1f1f1f;font-weight:bold"><div class="tri" style="right:0;bottom:0"></div></div>
<div style="left:1112px;top:29px;width:70px;height:28px;line-height:28px;border-right:1px solid #d0d1d5;padding-left:3px;white-space:nowrap;overflow:hidden;color:#1f1f1f;font-weight:bold"></div>
<div style="left:1182px;top:29px;width:70px;height:28px;line-height:28px;border-right:1px solid #d0d1d5;padding-left:3px;white-space:nowrap;overflow:hidden;color:#1f1f1f;font-weight:bold">正常</div>
<div style="left:0;top:57px;width:1252px;height:28px;background:#fff;border-bottom:1px solid #d0d1d5"></div>
<div style="left:0px;top:57px;width:322px;height:28px;line-height:28px;border-right:1px solid #d0d1d5;padding-left:2px;white-space:nowrap;overflow:hidden;color:#1f1f1f;font-weight:bold">桂枝<div class="tri" style="right:0;bottom:0"></div></div>
<div style="left:322px;top:57px;width:80px;height:28px;line-height:28px;border-right:1px solid #d0d1d5;padding-left:3px;white-space:nowrap;overflow:hidden;color:#1f1f1f;font-weight:bold;letter-spacing:.3px">1g*1000g/kg</div>
<div style="left:402px;top:57px;width:60px;height:28px;line-height:28px;border-right:1px solid #d0d1d5;padding-left:3px;white-space:nowrap;overflow:hidden;color:#1f1f1f;font-weight:bold">10<div class="tri" style="right:0;bottom:0"></div></div>
<div style="left:462px;top:57px;width:60px;height:28px;line-height:28px;border-right:1px solid #d0d1d5;padding-left:3px;white-space:nowrap;overflow:hidden;color:#1f1f1f;font-weight:bold">g</div>
<div style="left:522px;top:57px;width:60px;height:28px;line-height:28px;border-right:1px solid #d0d1d5;padding-left:3px;white-space:nowrap;overflow:hidden;color:#1f1f1f;font-weight:bold">70</div>
<div style="left:582px;top:57px;width:60px;height:28px;line-height:28px;border-right:1px solid #d0d1d5;padding-left:3px;white-space:nowrap;overflow:hidden;color:#1f1f1f;font-weight:bold">g</div>
<div style="left:642px;top:57px;width:60px;height:28px;line-height:28px;border-right:1px solid #d0d1d5;padding-left:3px;white-space:nowrap;overflow:hidden;color:#1f1f1f;font-weight:bold;"><div class="tri" style="right:0;bottom:0"></div></div>
<div style="left:702px;top:57px;width:70px;height:28px;line-height:28px;border-right:1px solid #d0d1d5;padding-left:3px;white-space:nowrap;overflow:hidden;color:#1f1f1f;font-weight:bold;text-align:right;padding-right:2px;padding-left:0">0.01</div>
<div style="left:772px;top:57px;width:45px;height:28px;line-height:28px;border-right:1px solid #d0d1d5;padding-left:3px;white-space:nowrap;overflow:hidden;color:#1f1f1f;font-weight:bold"><div class="cb" style="left:16px;top:7px;border-color:#dfe2ea"></div><div class="tri" style="right:0;bottom:0"></div></div>
<div style="left:817px;top:57px;width:45px;height:28px;line-height:28px;border-right:1px solid #d0d1d5;padding-left:3px;white-space:nowrap;overflow:hidden;color:#1f1f1f;font-weight:bold"><div class="cb" style="left:16px;top:7px;border-color:#dfe2ea"></div><div class="tri" style="right:0;bottom:0"></div></div>
<div style="left:862px;top:57px;width:70px;height:28px;line-height:28px;border-right:1px solid #d0d1d5;padding-left:3px;white-space:nowrap;overflow:hidden;color:#1f1f1f;font-weight:bold">乙类</div>
<div style="left:932px;top:57px;width:70px;height:28px;line-height:28px;border-right:1px solid #d0d1d5;padding-left:3px;white-space:nowrap;overflow:hidden;color:#1f1f1f;font-weight:bold">0%</div>
<div style="left:1002px;top:57px;width:110px;height:28px;line-height:28px;border-right:1px solid #d0d1d5;padding-left:3px;white-space:nowrap;overflow:hidden;color:#1f1f1f;font-weight:bold"><div class="tri" style="right:0;bottom:0"></div></div>
<div style="left:1112px;top:57px;width:70px;height:28px;line-height:28px;border-right:1px solid #d0d1d5;padding-left:3px;white-space:nowrap;overflow:hidden;color:#1f1f1f;font-weight:bold"></div>
<div style="left:1182px;top:57px;width:70px;height:28px;line-height:28px;border-right:1px solid #d0d1d5;padding-left:3px;white-space:nowrap;overflow:hidden;color:#1f1f1f;font-weight:bold">正常</div>
<div style="left:0;top:85px;width:1252px;height:28px;background:#fff;border-bottom:1px solid #d0d1d5"></div>
<div style="left:0px;top:85px;width:322px;height:28px;line-height:28px;border-right:1px solid #d0d1d5;padding-left:2px;white-space:nowrap;overflow:hidden;color:#1f1f1f;font-weight:bold">茯苓<div class="tri" style="right:0;bottom:0"></div></div>
<div style="left:322px;top:85px;width:80px;height:28px;line-height:28px;border-right:1px solid #d0d1d5;padding-left:3px;white-space:nowrap;overflow:hidden;color:#1f1f1f;font-weight:bold;letter-spacing:.3px">1g*1000g/kg</div>
<div style="left:402px;top:85px;width:60px;height:28px;line-height:28px;border-right:1px solid #d0d1d5;padding-left:3px;white-space:nowrap;overflow:hidden;color:#1f1f1f;font-weight:bold">20<div class="tri" style="right:0;bottom:0"></div></div>
<div style="left:462px;top:85px;width:60px;height:28px;line-height:28px;border-right:1px solid #d0d1d5;padding-left:3px;white-space:nowrap;overflow:hidden;color:#1f1f1f;font-weight:bold">g</div>
<div style="left:522px;top:85px;width:60px;height:28px;line-height:28px;border-right:1px solid #d0d1d5;padding-left:3px;white-space:nowrap;overflow:hidden;color:#1f1f1f;font-weight:bold">140</div>
<div style="left:582px;top:85px;width:60px;height:28px;line-height:28px;border-right:1px solid #d0d1d5;padding-left:3px;white-space:nowrap;overflow:hidden;color:#1f1f1f;font-weight:bold">g</div>
<div style="left:642px;top:85px;width:60px;height:28px;line-height:28px;border-right:1px solid #d0d1d5;padding-left:3px;white-space:nowrap;overflow:hidden;color:#1f1f1f;font-weight:bold;"><div class="tri" style="right:0;bottom:0"></div></div>
<div style="left:702px;top:85px;width:70px;height:28px;line-height:28px;border-right:1px solid #d0d1d5;padding-left:3px;white-space:nowrap;overflow:hidden;color:#1f1f1f;font-weight:bold;text-align:right;padding-right:2px;padding-left:0">0.04</div>
<div style="left:772px;top:85px;width:45px;height:28px;line-height:28px;border-right:1px solid #d0d1d5;padding-left:3px;white-space:nowrap;overflow:hidden;color:#1f1f1f;font-weight:bold"><div class="cb" style="left:16px;top:7px;border-color:#dfe2ea"></div><div class="tri" style="right:0;bottom:0"></div></div>
<div style="left:817px;top:85px;width:45px;height:28px;line-height:28px;border-right:1px solid #d0d1d5;padding-left:3px;white-space:nowrap;overflow:hidden;color:#1f1f1f;font-weight:bold"><div class="cb" style="left:16px;top:7px;border-color:#dfe2ea"></div><div class="tri" style="right:0;bottom:0"></div></div>
<div style="left:862px;top:85px;width:70px;height:28px;line-height:28px;border-right:1px solid #d0d1d5;padding-left:3px;white-space:nowrap;overflow:hidden;color:#1f1f1f;font-weight:bold">乙类</div>
<div style="left:932px;top:85px;width:70px;height:28px;line-height:28px;border-right:1px solid #d0d1d5;padding-left:3px;white-space:nowrap;overflow:hidden;color:#1f1f1f;font-weight:bold">0%</div>
<div style="left:1002px;top:85px;width:110px;height:28px;line-height:28px;border-right:1px solid #d0d1d5;padding-left:3px;white-space:nowrap;overflow:hidden;color:#1f1f1f;font-weight:bold"><div class="tri" style="right:0;bottom:0"></div></div>
<div style="left:1112px;top:85px;width:70px;height:28px;line-height:28px;border-right:1px solid #d0d1d5;padding-left:3px;white-space:nowrap;overflow:hidden;color:#1f1f1f;font-weight:bold"></div>
<div style="left:1182px;top:85px;width:70px;height:28px;line-height:28px;border-right:1px solid #d0d1d5;padding-left:3px;white-space:nowrap;overflow:hidden;color:#1f1f1f;font-weight:bold">正常</div>
<div style="left:0;top:113px;width:1252px;height:28px;background:#fff;border-bottom:1px solid #d0d1d5"></div>
<div style="left:0px;top:113px;width:322px;height:28px;line-height:28px;border-right:1px solid #d0d1d5;padding-left:2px;white-space:nowrap;overflow:hidden;color:#1f1f1f;font-weight:bold">龙骨<div class="tri" style="right:0;bottom:0"></div></div>
<div style="left:322px;top:113px;width:80px;height:28px;line-height:28px;border-right:1px solid #d0d1d5;padding-left:3px;white-space:nowrap;overflow:hidden;color:#1f1f1f;font-weight:bold;letter-spacing:.3px">1g*1000g/kg</div>
<div style="left:402px;top:113px;width:60px;height:28px;line-height:28px;border-right:1px solid #d0d1d5;padding-left:3px;white-space:nowrap;overflow:hidden;color:#1f1f1f;font-weight:bold">30<div class="tri" style="right:0;bottom:0"></div></div>
<div style="left:462px;top:113px;width:60px;height:28px;line-height:28px;border-right:1px solid #d0d1d5;padding-left:3px;white-space:nowrap;overflow:hidden;color:#1f1f1f;font-weight:bold">g</div>
<div style="left:522px;top:113px;width:60px;height:28px;line-height:28px;border-right:1px solid #d0d1d5;padding-left:3px;white-space:nowrap;overflow:hidden;color:#1f1f1f;font-weight:bold">210</div>
<div style="left:582px;top:113px;width:60px;height:28px;line-height:28px;border-right:1px solid #d0d1d5;padding-left:3px;white-space:nowrap;overflow:hidden;color:#1f1f1f;font-weight:bold">g</div>
<div style="left:642px;top:113px;width:60px;height:28px;line-height:28px;border-right:1px solid #d0d1d5;padding-left:3px;white-space:nowrap;overflow:hidden;color:#1f1f1f;font-weight:bold;"><div class="tri" style="right:0;bottom:0"></div></div>
<div style="left:702px;top:113px;width:70px;height:28px;line-height:28px;border-right:1px solid #d0d1d5;padding-left:3px;white-space:nowrap;overflow:hidden;color:#1f1f1f;font-weight:bold;text-align:right;padding-right:2px;padding-left:0">0.72</div>
<div style="left:772px;top:113px;width:45px;height:28px;line-height:28px;border-right:1px solid #d0d1d5;padding-left:3px;white-space:nowrap;overflow:hidden;color:#1f1f1f;font-weight:bold"><div class="cb" style="left:16px;top:7px;border-color:#dfe2ea"></div><div class="tri" style="right:0;bottom:0"></div></div>
<div style="left:817px;top:113px;width:45px;height:28px;line-height:28px;border-right:1px solid #d0d1d5;padding-left:3px;white-space:nowrap;overflow:hidden;color:#1f1f1f;font-weight:bold"><div class="cb" style="left:16px;top:7px;border-color:#dfe2ea"></div><div class="tri" style="right:0;bottom:0"></div></div>
<div style="left:862px;top:113px;width:70px;height:28px;line-height:28px;border-right:1px solid #d0d1d5;padding-left:3px;white-space:nowrap;overflow:hidden;color:#1f1f1f;font-weight:bold">乙类</div>
<div style="left:932px;top:113px;width:70px;height:28px;line-height:28px;border-right:1px solid #d0d1d5;padding-left:3px;white-space:nowrap;overflow:hidden;color:#1f1f1f;font-weight:bold">0%</div>
<div style="left:1002px;top:113px;width:110px;height:28px;line-height:28px;border-right:1px solid #d0d1d5;padding-left:3px;white-space:nowrap;overflow:hidden;color:#1f1f1f;font-weight:bold"><div class="tri" style="right:0;bottom:0"></div></div>
<div style="left:1112px;top:113px;width:70px;height:28px;line-height:28px;border-right:1px solid #d0d1d5;padding-left:3px;white-space:nowrap;overflow:hidden;color:#1f1f1f;font-weight:bold"></div>
<div style="left:1182px;top:113px;width:70px;height:28px;line-height:28px;border-right:1px solid #d0d1d5;padding-left:3px;white-space:nowrap;overflow:hidden;color:#1f1f1f;font-weight:bold">正常</div>
<div style="left:0;top:141px;width:1252px;height:28px;background:#fff;border-bottom:1px solid #d0d1d5"></div>
<div style="left:0px;top:141px;width:322px;height:28px;line-height:28px;border-right:1px solid #d0d1d5;padding-left:2px;white-space:nowrap;overflow:hidden;color:#1f1f1f;font-weight:bold">牡蛎<div class="tri" style="right:0;bottom:0"></div></div>
<div style="left:322px;top:141px;width:80px;height:28px;line-height:28px;border-right:1px solid #d0d1d5;padding-left:3px;white-space:nowrap;overflow:hidden;color:#1f1f1f;font-weight:bold;letter-spacing:.3px">1g*1000g/kg</div>
<div style="left:402px;top:141px;width:60px;height:28px;line-height:28px;border-right:1px solid #d0d1d5;padding-left:3px;white-space:nowrap;overflow:hidden;color:#1f1f1f;font-weight:bold">30<div class="tri" style="right:0;bottom:0"></div></div>
<div style="left:462px;top:141px;width:60px;height:28px;line-height:28px;border-right:1px solid #d0d1d5;padding-left:3px;white-space:nowrap;overflow:hidden;color:#1f1f1f;font-weight:bold">g</div>
<div style="left:522px;top:141px;width:60px;height:28px;line-height:28px;border-right:1px solid #d0d1d5;padding-left:3px;white-space:nowrap;overflow:hidden;color:#1f1f1f;font-weight:bold">210</div>
<div style="left:582px;top:141px;width:60px;height:28px;line-height:28px;border-right:1px solid #d0d1d5;padding-left:3px;white-space:nowrap;overflow:hidden;color:#1f1f1f;font-weight:bold">g</div>
<div style="left:642px;top:141px;width:60px;height:28px;line-height:28px;border-right:1px solid #d0d1d5;padding-left:3px;white-space:nowrap;overflow:hidden;color:#1f1f1f;font-weight:bold;"><div class="tri" style="right:0;bottom:0"></div></div>
<div style="left:702px;top:141px;width:70px;height:28px;line-height:28px;border-right:1px solid #d0d1d5;padding-left:3px;white-space:nowrap;overflow:hidden;color:#1f1f1f;font-weight:bold;text-align:right;padding-right:2px;padding-left:0">0.02</div>
<div style="left:772px;top:141px;width:45px;height:28px;line-height:28px;border-right:1px solid #d0d1d5;padding-left:3px;white-space:nowrap;overflow:hidden;color:#1f1f1f;font-weight:bold"><div class="cb" style="left:16px;top:7px;border-color:#dfe2ea"></div><div class="tri" style="right:0;bottom:0"></div></div>
<div style="left:817px;top:141px;width:45px;height:28px;line-height:28px;border-right:1px solid #d0d1d5;padding-left:3px;white-space:nowrap;overflow:hidden;color:#1f1f1f;font-weight:bold"><div class="cb" style="left:16px;top:7px;border-color:#dfe2ea"></div><div class="tri" style="right:0;bottom:0"></div></div>
<div style="left:862px;top:141px;width:70px;height:28px;line-height:28px;border-right:1px solid #d0d1d5;padding-left:3px;white-space:nowrap;overflow:hidden;color:#1f1f1f;font-weight:bold">乙类</div>
<div style="left:932px;top:141px;width:70px;height:28px;line-height:28px;border-right:1px solid #d0d1d5;padding-left:3px;white-space:nowrap;overflow:hidden;color:#1f1f1f;font-weight:bold">0%</div>
<div style="left:1002px;top:141px;width:110px;height:28px;line-height:28px;border-right:1px solid #d0d1d5;padding-left:3px;white-space:nowrap;overflow:hidden;color:#1f1f1f;font-weight:bold"><div class="tri" style="right:0;bottom:0"></div></div>
<div style="left:1112px;top:141px;width:70px;height:28px;line-height:28px;border-right:1px solid #d0d1d5;padding-left:3px;white-space:nowrap;overflow:hidden;color:#1f1f1f;font-weight:bold"></div>
<div style="left:1182px;top:141px;width:70px;height:28px;line-height:28px;border-right:1px solid #d0d1d5;padding-left:3px;white-space:nowrap;overflow:hidden;color:#1f1f1f;font-weight:bold">正常</div>
<div style="left:0;top:169px;width:1252px;height:28px;background:#fff;border-bottom:1px solid #d0d1d5"></div>
<div style="left:0px;top:169px;width:322px;height:28px;line-height:28px;border-right:1px solid #d0d1d5;padding-left:2px;white-space:nowrap;overflow:hidden;color:#1f1f1f;font-weight:bold">黄芪<div class="tri" style="right:0;bottom:0"></div></div>
<div style="left:322px;top:169px;width:80px;height:28px;line-height:28px;border-right:1px solid #d0d1d5;padding-left:3px;white-space:nowrap;overflow:hidden;color:#1f1f1f;font-weight:bold;letter-spacing:.3px">1g*1000g/kg</div>
<div style="left:402px;top:169px;width:60px;height:28px;line-height:28px;border-right:1px solid #d0d1d5;padding-left:3px;white-space:nowrap;overflow:hidden;color:#1f1f1f;font-weight:bold">10<div class="tri" style="right:0;bottom:0"></div></div>
<div style="left:462px;top:169px;width:60px;height:28px;line-height:28px;border-right:1px solid #d0d1d5;padding-left:3px;white-space:nowrap;overflow:hidden;color:#1f1f1f;font-weight:bold">g</div>
<div style="left:522px;top:169px;width:60px;height:28px;line-height:28px;border-right:1px solid #d0d1d5;padding-left:3px;white-space:nowrap;overflow:hidden;color:#1f1f1f;font-weight:bold">70</div>
<div style="left:582px;top:169px;width:60px;height:28px;line-height:28px;border-right:1px solid #d0d1d5;padding-left:3px;white-space:nowrap;overflow:hidden;color:#1f1f1f;font-weight:bold">g</div>
<div style="left:642px;top:169px;width:60px;height:28px;line-height:28px;border-right:1px solid #d0d1d5;padding-left:3px;white-space:nowrap;overflow:hidden;color:#1f1f1f;font-weight:bold;"><div class="tri" style="right:0;bottom:0"></div></div>
<div style="left:702px;top:169px;width:70px;height:28px;line-height:28px;border-right:1px solid #d0d1d5;padding-left:3px;white-space:nowrap;overflow:hidden;color:#1f1f1f;font-weight:bold;text-align:right;padding-right:2px;padding-left:0">0.06</div>
<div style="left:772px;top:169px;width:45px;height:28px;line-height:28px;border-right:1px solid #d0d1d5;padding-left:3px;white-space:nowrap;overflow:hidden;color:#1f1f1f;font-weight:bold"><div class="cb" style="left:16px;top:7px;border-color:#dfe2ea"></div><div class="tri" style="right:0;bottom:0"></div></div>
<div style="left:817px;top:169px;width:45px;height:28px;line-height:28px;border-right:1px solid #d0d1d5;padding-left:3px;white-space:nowrap;overflow:hidden;color:#1f1f1f;font-weight:bold"><div class="cb" style="left:16px;top:7px;border-color:#dfe2ea"></div><div class="tri" style="right:0;bottom:0"></div></div>
<div style="left:862px;top:169px;width:70px;height:28px;line-height:28px;border-right:1px solid #d0d1d5;padding-left:3px;white-space:nowrap;overflow:hidden;color:#1f1f1f;font-weight:bold">乙类</div>
<div style="left:932px;top:169px;width:70px;height:28px;line-height:28px;border-right:1px solid #d0d1d5;padding-left:3px;white-space:nowrap;overflow:hidden;color:#1f1f1f;font-weight:bold">0%</div>
<div style="left:1002px;top:169px;width:110px;height:28px;line-height:28px;border-right:1px solid #d0d1d5;padding-left:3px;white-space:nowrap;overflow:hidden;color:#1f1f1f;font-weight:bold"><div class="tri" style="right:0;bottom:0"></div></div>
<div style="left:1112px;top:169px;width:70px;height:28px;line-height:28px;border-right:1px solid #d0d1d5;padding-left:3px;white-space:nowrap;overflow:hidden;color:#1f1f1f;font-weight:bold"></div>
<div style="left:1182px;top:169px;width:70px;height:28px;line-height:28px;border-right:1px solid #d0d1d5;padding-left:3px;white-space:nowrap;overflow:hidden;color:#1f1f1f;font-weight:bold">正常</div>
<div style="left:0;top:197px;width:1252px;height:28px;background:#fff;border-bottom:1px solid #d0d1d5"></div>
<div style="left:0px;top:197px;width:322px;height:28px;line-height:28px;border-right:1px solid #d0d1d5;padding-left:2px;white-space:nowrap;overflow:hidden;color:#1f1f1f;font-weight:bold">五味子（北）<div class="tri" style="right:0;bottom:0"></div></div>
<div style="left:322px;top:197px;width:80px;height:28px;line-height:28px;border-right:1px solid #d0d1d5;padding-left:3px;white-space:nowrap;overflow:hidden;color:#1f1f1f;font-weight:bold;letter-spacing:.3px">1g*1000g/kg</div>
<div style="left:402px;top:197px;width:60px;height:28px;line-height:28px;border-right:1px solid #d0d1d5;padding-left:3px;white-space:nowrap;overflow:hidden;color:#1f1f1f;font-weight:bold">10<div class="tri" style="right:0;bottom:0"></div></div>
<div style="left:462px;top:197px;width:60px;height:28px;line-height:28px;border-right:1px solid #d0d1d5;padding-left:3px;white-space:nowrap;overflow:hidden;color:#1f1f1f;font-weight:bold">g</div>
<div style="left:522px;top:197px;width:60px;height:28px;line-height:28px;border-right:1px solid #d0d1d5;padding-left:3px;white-space:nowrap;overflow:hidden;color:#1f1f1f;font-weight:bold">70</div>
<div style="left:582px;top:197px;width:60px;height:28px;line-height:28px;border-right:1px solid #d0d1d5;padding-left:3px;white-space:nowrap;overflow:hidden;color:#1f1f1f;font-weight:bold">g</div>
<div style="left:642px;top:197px;width:60px;height:28px;line-height:28px;border-right:1px solid #d0d1d5;padding-left:3px;white-space:nowrap;overflow:hidden;color:#1f1f1f;font-weight:bold;"><div class="tri" style="right:0;bottom:0"></div></div>
<div style="left:702px;top:197px;width:70px;height:28px;line-height:28px;border-right:1px solid #d0d1d5;padding-left:3px;white-space:nowrap;overflow:hidden;color:#1f1f1f;font-weight:bold;text-align:right;padding-right:2px;padding-left:0">0.25</div>
<div style="left:772px;top:197px;width:45px;height:28px;line-height:28px;border-right:1px solid #d0d1d5;padding-left:3px;white-space:nowrap;overflow:hidden;color:#1f1f1f;font-weight:bold"><div class="cb" style="left:16px;top:7px;border-color:#dfe2ea"></div><div class="tri" style="right:0;bottom:0"></div></div>
<div style="left:817px;top:197px;width:45px;height:28px;line-height:28px;border-right:1px solid #d0d1d5;padding-left:3px;white-space:nowrap;overflow:hidden;color:#1f1f1f;font-weight:bold"><div class="cb" style="left:16px;top:7px;border-color:#dfe2ea"></div><div class="tri" style="right:0;bottom:0"></div></div>
<div style="left:862px;top:197px;width:70px;height:28px;line-height:28px;border-right:1px solid #d0d1d5;padding-left:3px;white-space:nowrap;overflow:hidden;color:#1f1f1f;font-weight:bold">乙类</div>
<div style="left:932px;top:197px;width:70px;height:28px;line-height:28px;border-right:1px solid #d0d1d5;padding-left:3px;white-space:nowrap;overflow:hidden;color:#1f1f1f;font-weight:bold">0%</div>
<div style="left:1002px;top:197px;width:110px;height:28px;line-height:28px;border-right:1px solid #d0d1d5;padding-left:3px;white-space:nowrap;overflow:hidden;color:#1f1f1f;font-weight:bold"><div class="tri" style="right:0;bottom:0"></div></div>
<div style="left:1112px;top:197px;width:70px;height:28px;line-height:28px;border-right:1px solid #d0d1d5;padding-left:3px;white-space:nowrap;overflow:hidden;color:#1f1f1f;font-weight:bold"></div>
<div style="left:1182px;top:197px;width:70px;height:28px;line-height:28px;border-right:1px solid #d0d1d5;padding-left:3px;white-space:nowrap;overflow:hidden;color:#1f1f1f;font-weight:bold">正常</div>
<div style="left:0;top:225px;width:1252px;height:28px;background:#fff2c9;border-bottom:1px solid #d0d1d5"></div>
<div style="left:0px;top:225px;width:322px;height:28px;line-height:28px;border-right:1px solid #d0d1d5;padding-left:2px;white-space:nowrap;overflow:hidden;color:#1f1f1f;font-weight:bold">炒酸枣仁<div class="tri" style="right:0;bottom:0"></div></div>
<div style="left:322px;top:225px;width:80px;height:28px;line-height:28px;border-right:1px solid #d0d1d5;padding-left:3px;white-space:nowrap;overflow:hidden;color:#1f1f1f;font-weight:bold;letter-spacing:.3px">1g*1000g/kg</div>
<div style="left:402px;top:225px;width:60px;height:28px;line-height:28px;border-right:1px solid #d0d1d5;padding-left:3px;white-space:nowrap;overflow:hidden;color:#1f1f1f;font-weight:bold">15<div class="tri" style="right:0;bottom:0"></div></div>
<div style="left:462px;top:225px;width:60px;height:28px;line-height:28px;border-right:1px solid #d0d1d5;padding-left:3px;white-space:nowrap;overflow:hidden;color:#1f1f1f;font-weight:bold">g</div>
<div style="left:522px;top:225px;width:60px;height:28px;line-height:28px;border-right:1px solid #d0d1d5;padding-left:3px;white-space:nowrap;overflow:hidden;color:#1f1f1f;font-weight:bold">105</div>
<div style="left:582px;top:225px;width:60px;height:28px;line-height:28px;border-right:1px solid #d0d1d5;padding-left:3px;white-space:nowrap;overflow:hidden;color:#1f1f1f;font-weight:bold">g</div>
<div style="left:642px;top:225px;width:60px;height:28px;line-height:28px;border-right:1px solid #d0d1d5;padding-left:3px;white-space:nowrap;overflow:hidden;color:#1f1f1f;font-weight:bold;font-weight:normal;">另包<div class="tri" style="right:0;bottom:0"></div></div>
<div style="left:702px;top:225px;width:70px;height:28px;line-height:28px;border-right:1px solid #d0d1d5;padding-left:3px;white-space:nowrap;overflow:hidden;color:#1f1f1f;font-weight:bold;text-align:right;padding-right:2px;padding-left:0">1.22</div>
<div style="left:772px;top:225px;width:45px;height:28px;line-height:28px;border-right:1px solid #d0d1d5;padding-left:3px;white-space:nowrap;overflow:hidden;color:#1f1f1f;font-weight:bold"><div class="cb" style="left:16px;top:7px;border-color:#dfe2ea"></div><div class="tri" style="right:0;bottom:0"></div></div>
<div style="left:817px;top:225px;width:45px;height:28px;line-height:28px;border-right:1px solid #d0d1d5;padding-left:3px;white-space:nowrap;overflow:hidden;color:#1f1f1f;font-weight:bold"><div class="cb" style="left:16px;top:7px;border-color:#dfe2ea"></div><div class="tri" style="right:0;bottom:0"></div></div>
<div style="left:862px;top:225px;width:70px;height:28px;line-height:28px;border-right:1px solid #d0d1d5;padding-left:3px;white-space:nowrap;overflow:hidden;color:#1f1f1f;font-weight:bold">乙类</div>
<div style="left:932px;top:225px;width:70px;height:28px;line-height:28px;border-right:1px solid #d0d1d5;padding-left:3px;white-space:nowrap;overflow:hidden;color:#1f1f1f;font-weight:bold">0%</div>
<div style="left:1002px;top:225px;width:110px;height:28px;line-height:28px;border-right:1px solid #d0d1d5;padding-left:3px;white-space:nowrap;overflow:hidden;color:#1f1f1f;font-weight:bold"><div class="tri" style="right:0;bottom:0"></div></div>
<div style="left:1112px;top:225px;width:70px;height:28px;line-height:28px;border-right:1px solid #d0d1d5;padding-left:3px;white-space:nowrap;overflow:hidden;color:#1f1f1f;font-weight:bold"></div>
<div style="left:1182px;top:225px;width:70px;height:28px;line-height:28px;border-right:1px solid #d0d1d5;padding-left:3px;white-space:nowrap;overflow:hidden;color:#1f1f1f;font-weight:bold">正常</div>
<div style="left:0;top:253px;width:1252px;height:28px;background:#fff;border-bottom:1px solid #d0d1d5"></div>
<div style="left:0px;top:253px;width:322px;height:28px;line-height:28px;border-right:1px solid #d0d1d5;padding-left:2px;white-space:nowrap;overflow:hidden;color:#1f1f1f;font-weight:bold">盐杜仲<div class="tri" style="right:0;bottom:0"></div></div>
<div style="left:322px;top:253px;width:80px;height:28px;line-height:28px;border-right:1px solid #d0d1d5;padding-left:3px;white-space:nowrap;overflow:hidden;color:#1f1f1f;font-weight:bold;letter-spacing:.3px">1g*1000g/kg</div>
<div style="left:402px;top:253px;width:60px;height:28px;line-height:28px;border-right:1px solid #d0d1d5;padding-left:3px;white-space:nowrap;overflow:hidden;color:#1f1f1f;font-weight:bold">10<div class="tri" style="right:0;bottom:0"></div></div>
<div style="left:462px;top:253px;width:60px;height:28px;line-height:28px;border-right:1px solid #d0d1d5;padding-left:3px;white-space:nowrap;overflow:hidden;color:#1f1f1f;font-weight:bold">g</div>
<div style="left:522px;top:253px;width:60px;height:28px;line-height:28px;border-right:1px solid #d0d1d5;padding-left:3px;white-space:nowrap;overflow:hidden;color:#1f1f1f;font-weight:bold">70</div>
<div style="left:582px;top:253px;width:60px;height:28px;line-height:28px;border-right:1px solid #d0d1d5;padding-left:3px;white-space:nowrap;overflow:hidden;color:#1f1f1f;font-weight:bold">g</div>
<div style="left:642px;top:253px;width:60px;height:28px;line-height:28px;border-right:1px solid #d0d1d5;padding-left:3px;white-space:nowrap;overflow:hidden;color:#1f1f1f;font-weight:bold;"><div class="tri" style="right:0;bottom:0"></div></div>
<div style="left:702px;top:253px;width:70px;height:28px;line-height:28px;border-right:1px solid #d0d1d5;padding-left:3px;white-space:nowrap;overflow:hidden;color:#1f1f1f;font-weight:bold;text-align:right;padding-right:2px;padding-left:0">0.04</div>
<div style="left:772px;top:253px;width:45px;height:28px;line-height:28px;border-right:1px solid #d0d1d5;padding-left:3px;white-space:nowrap;overflow:hidden;color:#1f1f1f;font-weight:bold"><div class="cb" style="left:16px;top:7px;border-color:#dfe2ea"></div><div class="tri" style="right:0;bottom:0"></div></div>
<div style="left:817px;top:253px;width:45px;height:28px;line-height:28px;border-right:1px solid #d0d1d5;padding-left:3px;white-space:nowrap;overflow:hidden;color:#1f1f1f;font-weight:bold"><div class="cb" style="left:16px;top:7px;border-color:#dfe2ea"></div><div class="tri" style="right:0;bottom:0"></div></div>
<div style="left:862px;top:253px;width:70px;height:28px;line-height:28px;border-right:1px solid #d0d1d5;padding-left:3px;white-space:nowrap;overflow:hidden;color:#1f1f1f;font-weight:bold">乙类</div>
<div style="left:932px;top:253px;width:70px;height:28px;line-height:28px;border-right:1px solid #d0d1d5;padding-left:3px;white-space:nowrap;overflow:hidden;color:#1f1f1f;font-weight:bold">0%</div>
<div style="left:1002px;top:253px;width:110px;height:28px;line-height:28px;border-right:1px solid #d0d1d5;padding-left:3px;white-space:nowrap;overflow:hidden;color:#1f1f1f;font-weight:bold"><div class="tri" style="right:0;bottom:0"></div></div>
<div style="left:1112px;top:253px;width:70px;height:28px;line-height:28px;border-right:1px solid #d0d1d5;padding-left:3px;white-space:nowrap;overflow:hidden;color:#1f1f1f;font-weight:bold"></div>
<div style="left:1182px;top:253px;width:70px;height:28px;line-height:28px;border-right:1px solid #d0d1d5;padding-left:3px;white-space:nowrap;overflow:hidden;color:#1f1f1f;font-weight:bold">正常</div>
<div style="left:0;top:281px;width:1252px;height:28px;background:#fff;border-bottom:1px solid #d0d1d5"></div>
<div style="left:0px;top:281px;width:322px;height:28px;line-height:28px;border-right:1px solid #d0d1d5;padding-left:2px;white-space:nowrap;overflow:hidden;color:#1f1f1f;font-weight:bold">仙鹤草<div class="tri" style="right:0;bottom:0"></div></div>
<div style="left:322px;top:281px;width:80px;height:28px;line-height:28px;border-right:1px solid #d0d1d5;padding-left:3px;white-space:nowrap;overflow:hidden;color:#1f1f1f;font-weight:bold;letter-spacing:.3px">1g*1000g/kg</div>
<div style="left:402px;top:281px;width:60px;height:28px;line-height:28px;border-right:1px solid #d0d1d5;padding-left:3px;white-space:nowrap;overflow:hidden;color:#1f1f1f;font-weight:bold">10<div class="tri" style="right:0;bottom:0"></div></div>
<div style="left:462px;top:281px;width:60px;height:28px;line-height:28px;border-right:1px solid #d0d1d5;padding-left:3px;white-space:nowrap;overflow:hidden;color:#1f1f1f;font-weight:bold">g</div>
<div style="left:522px;top:281px;width:60px;height:28px;line-height:28px;border-right:1px solid #d0d1d5;padding-left:3px;white-space:nowrap;overflow:hidden;color:#1f1f1f;font-weight:bold">70</div>
<div style="left:582px;top:281px;width:60px;height:28px;line-height:28px;border-right:1px solid #d0d1d5;padding-left:3px;white-space:nowrap;overflow:hidden;color:#1f1f1f;font-weight:bold">g</div>
<div style="left:642px;top:281px;width:60px;height:28px;line-height:28px;border-right:1px solid #d0d1d5;padding-left:3px;white-space:nowrap;overflow:hidden;color:#1f1f1f;font-weight:bold;"><div class="tri" style="right:0;bottom:0"></div></div>
<div style="left:702px;top:281px;width:70px;height:28px;line-height:28px;border-right:1px solid #d0d1d5;padding-left:3px;white-space:nowrap;overflow:hidden;color:#1f1f1f;font-weight:bold;text-align:right;padding-right:2px;padding-left:0">0.01</div>
<div style="left:772px;top:281px;width:45px;height:28px;line-height:28px;border-right:1px solid #d0d1d5;padding-left:3px;white-space:nowrap;overflow:hidden;color:#1f1f1f;font-weight:bold"><div class="cb" style="left:16px;top:7px;border-color:#dfe2ea"></div><div class="tri" style="right:0;bottom:0"></div></div>
<div style="left:817px;top:281px;width:45px;height:28px;line-height:28px;border-right:1px solid #d0d1d5;padding-left:3px;white-space:nowrap;overflow:hidden;color:#1f1f1f;font-weight:bold"><div class="cb" style="left:16px;top:7px;border-color:#dfe2ea"></div><div class="tri" style="right:0;bottom:0"></div></div>
<div style="left:862px;top:281px;width:70px;height:28px;line-height:28px;border-right:1px solid #d0d1d5;padding-left:3px;white-space:nowrap;overflow:hidden;color:#1f1f1f;font-weight:bold">乙类</div>
<div style="left:932px;top:281px;width:70px;height:28px;line-height:28px;border-right:1px solid #d0d1d5;padding-left:3px;white-space:nowrap;overflow:hidden;color:#1f1f1f;font-weight:bold">0%</div>
<div style="left:1002px;top:281px;width:110px;height:28px;line-height:28px;border-right:1px solid #d0d1d5;padding-left:3px;white-space:nowrap;overflow:hidden;color:#1f1f1f;font-weight:bold"><div class="tri" style="right:0;bottom:0"></div></div>
<div style="left:1112px;top:281px;width:70px;height:28px;line-height:28px;border-right:1px solid #d0d1d5;padding-left:3px;white-space:nowrap;overflow:hidden;color:#1f1f1f;font-weight:bold"></div>
<div style="left:1182px;top:281px;width:70px;height:28px;line-height:28px;border-right:1px solid #d0d1d5;padding-left:3px;white-space:nowrap;overflow:hidden;color:#1f1f1f;font-weight:bold">正常</div>
<div style="left:0;top:309px;width:1252px;height:28px;background:#fff;border-bottom:1px solid #d0d1d5"></div>
<div style="left:0px;top:309px;width:322px;height:28px;line-height:28px;border-right:1px solid #d0d1d5;padding-left:2px;white-space:nowrap;overflow:hidden;color:#1f1f1f;font-weight:bold">党参片<div class="tri" style="right:0;bottom:0"></div></div>
<div style="left:322px;top:309px;width:80px;height:28px;line-height:28px;border-right:1px solid #d0d1d5;padding-left:3px;white-space:nowrap;overflow:hidden;color:#1f1f1f;font-weight:bold;letter-spacing:.3px">1g*1000g/kg</div>
<div style="left:402px;top:309px;width:60px;height:28px;line-height:28px;border-right:1px solid #d0d1d5;padding-left:3px;white-space:nowrap;overflow:hidden;color:#1f1f1f;font-weight:bold">10<div class="tri" style="right:0;bottom:0"></div></div>
<div style="left:462px;top:309px;width:60px;height:28px;line-height:28px;border-right:1px solid #d0d1d5;padding-left:3px;white-space:nowrap;overflow:hidden;color:#1f1f1f;font-weight:bold">g</div>
<div style="left:522px;top:309px;width:60px;height:28px;line-height:28px;border-right:1px solid #d0d1d5;padding-left:3px;white-space:nowrap;overflow:hidden;color:#1f1f1f;font-weight:bold">70</div>
<div style="left:582px;top:309px;width:60px;height:28px;line-height:28px;border-right:1px solid #d0d1d5;padding-left:3px;white-space:nowrap;overflow:hidden;color:#1f1f1f;font-weight:bold">g</div>
<div style="left:642px;top:309px;width:60px;height:28px;line-height:28px;border-right:1px solid #d0d1d5;padding-left:3px;white-space:nowrap;overflow:hidden;color:#1f1f1f;font-weight:bold;"><div class="tri" style="right:0;bottom:0"></div></div>
<div style="left:702px;top:309px;width:70px;height:28px;line-height:28px;border-right:1px solid #d0d1d5;padding-left:3px;white-space:nowrap;overflow:hidden;color:#1f1f1f;font-weight:bold;text-align:right;padding-right:2px;padding-left:0">0.05</div>
<div style="left:772px;top:309px;width:45px;height:28px;line-height:28px;border-right:1px solid #d0d1d5;padding-left:3px;white-space:nowrap;overflow:hidden;color:#1f1f1f;font-weight:bold"><div class="cb" style="left:16px;top:7px;border-color:#dfe2ea"></div><div class="tri" style="right:0;bottom:0"></div></div>
<div style="left:817px;top:309px;width:45px;height:28px;line-height:28px;border-right:1px solid #d0d1d5;padding-left:3px;white-space:nowrap;overflow:hidden;color:#1f1f1f;font-weight:bold"><div class="cb" style="left:16px;top:7px;border-color:#dfe2ea"></div><div class="tri" style="right:0;bottom:0"></div></div>
<div style="left:862px;top:309px;width:70px;height:28px;line-height:28px;border-right:1px solid #d0d1d5;padding-left:3px;white-space:nowrap;overflow:hidden;color:#1f1f1f;font-weight:bold">乙类</div>
<div style="left:932px;top:309px;width:70px;height:28px;line-height:28px;border-right:1px solid #d0d1d5;padding-left:3px;white-space:nowrap;overflow:hidden;color:#1f1f1f;font-weight:bold">0%</div>
<div style="left:1002px;top:309px;width:110px;height:28px;line-height:28px;border-right:1px solid #d0d1d5;padding-left:3px;white-space:nowrap;overflow:hidden;color:#1f1f1f;font-weight:bold"><div class="tri" style="right:0;bottom:0"></div></div>
<div style="left:1112px;top:309px;width:70px;height:28px;line-height:28px;border-right:1px solid #d0d1d5;padding-left:3px;white-space:nowrap;overflow:hidden;color:#1f1f1f;font-weight:bold"></div>
<div style="left:1182px;top:309px;width:70px;height:28px;line-height:28px;border-right:1px solid #d0d1d5;padding-left:3px;white-space:nowrap;overflow:hidden;color:#1f1f1f;font-weight:bold">正常</div>
</div>
<div style="left:1451px;top:629px;width:8px;height:290px;background:#fff;border-left:1px solid #e4e6ea"></div>
<div style="left:1452px;top:630px;width:7px;height:187px;background:#c3c3c3;border-radius:3px"></div>
<div style="left:1451px;top:601px;width:8px;height:29px;background:#f5f7fb;border-bottom:1px solid #d0d1d5"></div>
<div style="left:199px;top:919px;width:1260px;height:28px;background:#fff;border-top:1px solid #d4d7de"></div>
<div class="t" style="left:211px;top:922px;height:26px;line-height:26px;font-size:12px;color:#858585;letter-spacing:0.523px">合计：459.06&nbsp;&nbsp;&nbsp;已开数量：15</div>
<div style="left:827px;top:824px;width:78px;height:32px;border:3px solid #f0323a"></div>
<svg style="left:1000px;top:532px" width="62" height="16" viewBox="0 0 62 16"><path d="M0 0H62V3C62 10 57 14.500 50 14.500H12C5 14.500 0 10 0 3Z" fill="#e6e6e6"/><path d="M27 11.500l4-5 4 5z" fill="#555"/></svg>
<div style="left:1460px;top:536px;width:9px;height:414px;background:#f0f0f0"></div>
<svg style="left:1456px;top:712px" width="13" height="60" viewBox="0 0 13 60"><path d="M13 0C7 4 4 6 4 12v36c0 6 3 8 9 12z" fill="#e2e2e2"/><path d="M6 26l5 4-5 4z" fill="#555"/></svg>
<div style="left:1469px;top:537px;width:399px;height:413px;background:#fff"></div>
<div class="t" style="left:1485px;top:547px;height:22px;line-height:22px;font-size:14px;color:#4e7ecb">历史处方</div>
<div class="t" style="left:1561px;top:547px;height:22px;line-height:22px;font-size:14px;color:#222">常用模板</div>
<div style="left:1485px;top:576px;width:132px;height:1px;background:#dfe3ec"></div>
<div style="left:1485px;top:575px;width:56px;height:2px;background:#4e7ecb"></div>
<svg style="left:1809px;top:551px" width="15" height="13" viewBox="0 0 15 13"><path d="M13.500 5V3H7L5.500 1H1v11h5.500" fill="none" stroke="#5a86cf" stroke-width="1.300"/><path d="M8.500 12l2.500-4 2.500 4z" fill="none" stroke="#5a86cf" stroke-width="1.200"/></svg>
<div class="t" style="left:1830px;top:547px;height:22px;line-height:22px;font-size:14px;color:#222">引用</div>
<div style="left:1480px;top:599px;width:14px;height:14px;background:#6c95da;border-radius:50%"></div>
<div style="left:1508px;top:582px;width:346px;height:368px;border-left:1px solid #d0d1d5;border-right:1px solid #d0d1d5;border-top:1px solid #d0d1d5;background:#fff"></div>
<div style="left:1509px;top:583px;width:344px;height:53px;background:#f5f7fb;border-bottom:1px solid #d0d1d5"></div>
<div style="left:1537px;top:582px;width:1px;height:368px;background:#d0d1d5"></div>
<svg style="left:1516px;top:602px" width="14" height="14" viewBox="0 0 15 15"><rect width="15" height="15" rx="2" fill="#4a7bcb"/><path d="M3.500 7.500l3 3 5-6" stroke="#fff" stroke-width="1.500" fill="none"/></svg>
<div class="t" style="left:1541px;top:585px;height:24px;line-height:24px;font-size:13px;color:#222">2025-12-05 11:54:44 水煎日一剂分二次服 每日2次 7</div>
<div class="t" style="left:1541px;top:609px;height:24px;line-height:24px;font-size:13px;color:#222">贴 水煎</div>
<div style="left:1509px;top:636px;width:344px;height:28px;border-bottom:1px solid #d0d1d5;overflow:hidden"><span class="t" style="position:absolute;left:32px;top:0;line-height:28px;color:#333">北柴胡 *</span></div>
<svg style="left:1516px;top:643px" width="14" height="14" viewBox="0 0 15 15"><rect width="15" height="15" rx="2" fill="#4a7bcb"/><path d="M3.500 7.500l3 3 5-6" stroke="#fff" stroke-width="1.500" fill="none"/></svg>
<div style="left:1509px;top:664px;width:344px;height:28px;border-bottom:1px solid #d0d1d5;overflow:hidden"><span class="t" style="position:absolute;left:32px;top:0;line-height:28px;color:#333">桂枝 *</span></div>
<svg style="left:1516px;top:671px" width="14" height="14" viewBox="0 0 15 15"><rect width="15" height="15" rx="2" fill="#4a7bcb"/><path d="M3.500 7.500l3 3 5-6" stroke="#fff" stroke-width="1.500" fill="none"/></svg>
<div style="left:1509px;top:692px;width:344px;height:28px;border-bottom:1px solid #d0d1d5;overflow:hidden"><span class="t" style="position:absolute;left:32px;top:0;line-height:28px;color:#333">茯苓 *</span></div>
<svg style="left:1516px;top:699px" width="14" height="14" viewBox="0 0 15 15"><rect width="15" height="15" rx="2" fill="#4a7bcb"/><path d="M3.500 7.500l3 3 5-6" stroke="#fff" stroke-width="1.500" fill="none"/></svg>
<div style="left:1509px;top:720px;width:344px;height:28px;border-bottom:1px solid #d0d1d5;overflow:hidden"><span class="t" style="position:absolute;left:32px;top:0;line-height:28px;color:#333">龙骨 *</span></div>
<svg style="left:1516px;top:727px" width="14" height="14" viewBox="0 0 15 15"><rect width="15" height="15" rx="2" fill="#4a7bcb"/><path d="M3.500 7.500l3 3 5-6" stroke="#fff" stroke-width="1.500" fill="none"/></svg>
<div style="left:1509px;top:748px;width:344px;height:28px;border-bottom:1px solid #d0d1d5;overflow:hidden"><span class="t" style="position:absolute;left:32px;top:0;line-height:28px;color:#333">牡蛎 *</span></div>
<svg style="left:1516px;top:755px" width="14" height="14" viewBox="0 0 15 15"><rect width="15" height="15" rx="2" fill="#4a7bcb"/><path d="M3.500 7.500l3 3 5-6" stroke="#fff" stroke-width="1.500" fill="none"/></svg>
<div style="left:1509px;top:776px;width:344px;height:28px;border-bottom:1px solid #d0d1d5;overflow:hidden"><span class="t" style="position:absolute;left:32px;top:0;line-height:28px;color:#333">黄芪 *</span></div>
<svg style="left:1516px;top:783px" width="14" height="14" viewBox="0 0 15 15"><rect width="15" height="15" rx="2" fill="#4a7bcb"/><path d="M3.500 7.500l3 3 5-6" stroke="#fff" stroke-width="1.500" fill="none"/></svg>
<div style="left:1509px;top:804px;width:344px;height:28px;border-bottom:1px solid #d0d1d5;overflow:hidden"><span class="t" style="position:absolute;left:32px;top:0;line-height:28px;color:#333">五味子（北） *</span></div>
<svg style="left:1516px;top:811px" width="14" height="14" viewBox="0 0 15 15"><rect width="15" height="15" rx="2" fill="#4a7bcb"/><path d="M3.500 7.500l3 3 5-6" stroke="#fff" stroke-width="1.500" fill="none"/></svg>
<div style="left:1509px;top:832px;width:344px;height:28px;border-bottom:1px solid #d0d1d5;overflow:hidden"><span class="t" style="position:absolute;left:32px;top:0;line-height:28px;color:#333">炒酸枣仁 * 另包</span></div>
<svg style="left:1516px;top:839px" width="14" height="14" viewBox="0 0 15 15"><rect width="15" height="15" rx="2" fill="#4a7bcb"/><path d="M3.500 7.500l3 3 5-6" stroke="#fff" stroke-width="1.500" fill="none"/></svg>
<div style="left:1509px;top:860px;width:344px;height:28px;border-bottom:1px solid #d0d1d5;overflow:hidden"><span class="t" style="position:absolute;left:32px;top:0;line-height:28px;color:#333">盐杜仲 *</span></div>
<svg style="left:1516px;top:867px" width="14" height="14" viewBox="0 0 15 15"><rect width="15" height="15" rx="2" fill="#4a7bcb"/><path d="M3.500 7.500l3 3 5-6" stroke="#fff" stroke-width="1.500" fill="none"/></svg>
<div style="left:1509px;top:888px;width:344px;height:28px;border-bottom:1px solid #d0d1d5;overflow:hidden"><span class="t" style="position:absolute;left:32px;top:0;line-height:28px;color:#333">仙鹤草 *</span></div>
<svg style="left:1516px;top:895px" width="14" height="14" viewBox="0 0 15 15"><rect width="15" height="15" rx="2" fill="#4a7bcb"/><path d="M3.500 7.500l3 3 5-6" stroke="#fff" stroke-width="1.500" fill="none"/></svg>
<div style="left:1509px;top:916px;width:344px;height:28px;border-bottom:1px solid #d0d1d5;overflow:hidden"><span class="t" style="position:absolute;left:32px;top:0;line-height:28px;color:#333">党参片 *</span></div>
<svg style="left:1516px;top:923px" width="14" height="14" viewBox="0 0 15 15"><rect width="15" height="15" rx="2" fill="#4a7bcb"/><path d="M3.500 7.500l3 3 5-6" stroke="#fff" stroke-width="1.500" fill="none"/></svg>
<div style="left:1509px;top:944px;width:344px;height:6px;border-bottom:1px solid #d0d1d5;overflow:hidden"><span class="t" style="position:absolute;left:32px;top:0;line-height:28px;color:#333"></span></div>
<div style="left:1537px;top:582px;width:1px;height:368px;background:#d0d1d5"></div>
<div style="left:1853px;top:582px;width:2px;height:368px;background:#c8c8c8"></div>
<div style="left:1860px;top:578px;width:8px;height:372px;background:#fff"></div>
<div style="left:1860px;top:578px;width:8px;height:262px;background:#c1c1c1"></div>
<div style="left:1868px;top:536px;width:1px;height:414px;background:#dfe7f5"></div>
<div style="left:1869px;top:223px;width:47px;height:727px;background:#fff"></div>
<div style="left:1868px;top:223px;width:1px;height:727px;background:#d3e0f5"></div>
<svg style="left:1880px;top:232px" width="24" height="24" viewBox="0 0 24 24" fill="none" stroke="#4e7ecb" stroke-width="1.900" stroke-linejoin="round" stroke-linecap="round"><rect x="2" y="7.500" width="20" height="9.500" rx="4.750" transform="rotate(-35 12 12)"/><path d="M12.300 5.800l6 8.600a4.750 4.750 0 0 0 2-6.800l-1.200-1.700a4.750 4.750 0 0 0-6.800-.1z" fill="#4e7ecb" stroke="none"/></svg>
<div class="t" style="left:1868px;top:263px;height:12px;line-height:12px;font-size:11px;color:#1c1c1c;width:48px;text-align:center;font-weight:500;letter-spacing:-.3px">过敏</div>
<div class="t" style="left:1868px;top:275px;height:12px;line-height:12px;font-size:11px;color:#1c1c1c;width:48px;text-align:center;font-weight:500;letter-spacing:-.3px">史既</div>
<div class="t" style="left:1868px;top:287px;height:12px;line-height:12px;font-size:11px;color:#1c1c1c;width:48px;text-align:center;font-weight:500;letter-spacing:-.3px">往史</div>
<svg style="left:1880px;top:311px" width="24" height="24" viewBox="0 0 24 24" fill="none" stroke="#4e7ecb" stroke-width="1.900" stroke-linejoin="round" stroke-linecap="round"><rect x="6" y="3" width="14" height="18" rx="1"/><path d="M4 7h3M4 10.500h3M4 14h3M4 17.500h3M13 8.500v7M9.500 12h7"/></svg>
<div class="t" style="left:1868px;top:341px;height:12px;line-height:12px;font-size:11px;color:#1c1c1c;width:48px;text-align:center;font-weight:500;letter-spacing:-.3px">医嘱</div>
<div class="t" style="left:1868px;top:353px;height:12px;line-height:12px;font-size:11px;color:#1c1c1c;width:48px;text-align:center;font-weight:500;letter-spacing:-.3px">模板</div>
<svg style="left:1880px;top:379px" width="24" height="24" viewBox="0 0 24 24" fill="none" stroke="#4e7ecb" stroke-width="1.900" stroke-linejoin="round" stroke-linecap="round"><circle cx="9" cy="8" r="4.500"/><path d="M2 21c.5-5 3.500-7 7-7 2 0 3.800.7 5 2M17 9.500h5M16 14h6M18 18.500h4"/></svg>
<div class="t" style="left:1868px;top:408px;height:12px;line-height:12px;font-size:11px;color:#1c1c1c;width:48px;text-align:center;font-weight:500;letter-spacing:-.3px">患者</div>
<div class="t" style="left:1868px;top:420px;height:12px;line-height:12px;font-size:11px;color:#1c1c1c;width:48px;text-align:center;font-weight:500;letter-spacing:-.3px">信息</div>
<svg style="left:1880px;top:445px" width="24" height="24" viewBox="0 0 24 24" fill="none" stroke="#4e7ecb" stroke-width="1.900" stroke-linejoin="round" stroke-linecap="round"><path d="M15 3l6 6M18 6l-3 3M12.500 6.500l5 5-7.500 7.500H5.500V14.500zM5.500 19L2.500 22M10 9l2 2"/></svg>
<div class="t" style="left:1868px;top:475px;height:12px;line-height:12px;font-size:11px;color:#1c1c1c;width:48px;text-align:center;font-weight:500;letter-spacing:-.3px">皮试</div>
<div class="t" style="left:1868px;top:487px;height:12px;line-height:12px;font-size:11px;color:#1c1c1c;width:48px;text-align:center;font-weight:500;letter-spacing:-.3px">结果</div>
<svg style="left:1880px;top:511px" width="24" height="24" viewBox="0 0 24 24" fill="none" stroke="#4e7ecb" stroke-width="1.900" stroke-linejoin="round" stroke-linecap="round"><path d="M3 5v15M3 16h18v4M21 16v-5H11v5"/><rect x="5.500" y="9" width="4" height="4"/></svg>
<div class="t" style="left:1868px;top:543px;height:12px;line-height:12px;font-size:11px;color:#1c1c1c;width:48px;text-align:center;font-weight:500;letter-spacing:-.3px">住院</div>
<div class="t" style="left:1868px;top:555px;height:12px;line-height:12px;font-size:11px;color:#1c1c1c;width:48px;text-align:center;font-weight:500;letter-spacing:-.3px">申请</div>
<svg style="left:1880px;top:578px" width="24" height="24" viewBox="0 0 24 24" fill="none" stroke="#4e7ecb" stroke-width="1.900" stroke-linejoin="round" stroke-linecap="round"><path d="M3 19V8h11M21 13v6M3 17h18M3 19v1.500M21 19v1.500M6.500 13h2M10.500 13h1"/><circle cx="17.500" cy="7.500" r="3.500"/></svg>
<div class="t" style="left:1868px;top:609px;height:12px;line-height:12px;font-size:11px;color:#1c1c1c;width:48px;text-align:center;font-weight:500;letter-spacing:-.3px">留观</div>
<div class="t" style="left:1868px;top:621px;height:12px;line-height:12px;font-size:11px;color:#1c1c1c;width:48px;text-align:center;font-weight:500;letter-spacing:-.3px">登记</div>
<svg style="left:1880px;top:646px" width="24" height="24" viewBox="0 0 24 24" fill="none" stroke="#4e7ecb" stroke-width="1.900" stroke-linejoin="round" stroke-linecap="round"><path d="M5 3h10l4 4v14H5zM7.500 14.500l3-3 2.500 2.500 1.500-1.500 2 2"/></svg>
<div class="t" style="left:1868px;top:677px;height:12px;line-height:12px;font-size:11px;color:#1c1c1c;width:48px;text-align:center;font-weight:500;letter-spacing:-.3px">近期</div>
<div class="t" style="left:1868px;top:689px;height:12px;line-height:12px;font-size:11px;color:#1c1c1c;width:48px;text-align:center;font-weight:500;letter-spacing:-.3px">互认</div>
<svg style="left:1882px;top:723px" width="20" height="4" viewBox="0 0 20 4"><circle cx="2" cy="2" r="1.200" fill="#4e7ecb"/><circle cx="10" cy="2" r="1.200" fill="#4e7ecb"/><circle cx="18" cy="2" r="1.200" fill="#4e7ecb"/></svg>
<div class="t" style="left:1868px;top:744px;height:12px;line-height:12px;font-size:11px;color:#1c1c1c;width:48px;text-align:center;font-weight:500;letter-spacing:-.3px">更多</div>
<div style="left:193px;top:950px;width:1723px;height:27px;background:#edf1fa"></div>
<div class="t" style="left:1720px;top:952px;height:24px;line-height:24px;font-size:14px;color:#222;letter-spacing:-0.163px">已接诊： <b style="font-size:15px">32</b> 人</div>
<div class="t" style="left:1834.5px;top:952px;height:24px;line-height:24px;font-size:14px;color:#222;letter-spacing:-0.018px">候诊： <b style="font-size:15px">0</b> 人</div>
<div style="left:40px;top:977px;width:1876px;height:40px;background:#65c9ea;border:1px solid #4b4a4a"></div>
<svg style="left:51px;top:983px" width="28" height="28" viewBox="0 0 28 28"><path d="M1 5l11-1.800V13H1zM13.500 3L27 .8V13H13.500zM1 14.500h11v9.800L1 22.700zM13.500 14.500H27v12.500l-13.500-2z" fill="#fff"/></svg>
<svg style="left:105px;top:984px" width="32" height="26" viewBox="0 0 32 26"><path d="M6 4h24l-5 18H1z" fill="#4f9be0" opacity=".55"/><path d="M9 7h18l-3.500 12H5.500z" fill="#bfe0fa" stroke="#3d8ad6" stroke-width="1"/><path d="M12 10h11l-2 6H10z" fill="#3d8ad6"/><path d="M14.500 12h6l-.7 2h-6z" fill="#e8f4ff"/></svg>
<svg style="left:166px;top:981px" width="34" height="32" viewBox="0 0 34 32"><rect x="1" y="1" width="14" height="24" rx="1" fill="#2b8be0" stroke="#fff" stroke-width="1.200"/><path d="M1 7h14" stroke="#cfe8ff" stroke-width="1.200"/><rect x="6" y="17" width="26" height="13" rx="2" fill="#6f8fa8" stroke="#fff" stroke-width="1.200"/><path d="M14 17v-3h9v3M9 23h20M12 21.500v3M26 21.500v3" stroke="#fff" stroke-width="1.200" fill="none"/></svg>
<svg style="left:229px;top:981px" width="34" height="32" viewBox="0 0 34 32"><circle cx="12" cy="12" r="10" fill="#3a8fd8"/><path d="M5 8c3-1 5 1 4 4s3 3 2 6-4 2-5-1-3-5-1-9zM14 4c3 0 5 2 6 4s-3 2-4 1-3-3-2-5z" fill="#4fb04a"/><path d="M3 3c4-2 9-1 12 3l2-2 .5 8-7.500-1 2.500-2C10 6 6 5 3 3z" fill="#f2a91e"/><rect x="17" y="9" width="12" height="22" fill="#b9bfc6" stroke="#7f878f" stroke-width="1"/><path d="M19 13h8M19 16h8M19 19h8" stroke="#6a7078" stroke-width="1.200"/><circle cx="20.500" cy="27" r="1" fill="#4fd04a"/></svg>
<svg style="left:290px;top:981px" width="34" height="32" viewBox="0 0 34 32"><path d="M3 5l9-3v27l-9-3z" fill="#8fd3df" stroke="#5aa3b4" stroke-width="1"/><path d="M12 2l6 4v22l-6 1z" fill="#6db4c6"/><path d="M19 12l8-3v20l-8-1z" fill="#9edbe4" stroke="#5aa3b4" stroke-width="1"/><path d="M27 9l4 3v15l-4 2z" fill="#6db4c6"/><path d="M5 8l5-1.500M5 11l5-1.500M5 14l5-1.500M5 17l5-1.500M21 15l4-1M21 18l4-1M21 21l4-1" stroke="#e8fbff" stroke-width="1"/></svg>
<div style="left:339px;top:978px;width:52px;height:38px;border-left:1px solid #3f6c7d;border-right:1px solid #3f6c7d"></div>
<svg style="left:348px;top:982px" width="34" height="30" viewBox="0 0 34 30"><path d="M2 6h10l2 2h17v19H2z" fill="#e8c863"/><path d="M2 10h29v17H2z" fill="#f7e29a" stroke="#d8b655" stroke-width="1"/><path d="M4 4h8l2 2h-10z" fill="#f3d575"/><rect x="6" y="3.500" width="3" height="2" fill="#3da340"/><rect x="13" y="4.500" width="3" height="2" fill="#d8342c"/><rect x="21" y="5.500" width="3" height="2" fill="#2b7be0"/><path d="M7 17h20v11h-4v-6H11v6H7z" fill="#8fc6ec" stroke="#5f9fd0" stroke-width="1"/></svg>
<div style="left:394px;top:978px;width:1px;height:38px;background:#3f6c7d"></div>
<div style="left:398px;top:978px;width:1px;height:38px;background:#3f6c7d"></div>
<svg style="left:415px;top:979.600px" width="34" height="34" viewBox="-3 -4 34 34"><defs><clipPath id="iec"><circle cx="13.500" cy="13.500" r="13.500"/></clipPath><radialGradient id="ieg" cx="13" cy="11" r="15" gradientUnits="userSpaceOnUse"><stop offset="0" stop-color="#b8f8ff"/><stop offset=".6" stop-color="#7fdcf8"/><stop offset="1" stop-color="#3a9ee4"/></radialGradient></defs><g clip-path="url(#iec)"><path fill-rule="evenodd" d="M0 0H27V27H0Z M8.300 11.200A5.400 5.700 0 0 1 19.100 11.200Z M8.200 15.300H28V19.300H19.600C18.400 21 16 21.900 13.700 21.900 10.500 21.900 8.500 19 8.200 15.300Z" fill="url(#ieg)" stroke="#2b86d2" stroke-width=".9"/></g><circle cx="13.500" cy="13.500" r="13.200" fill="none" stroke="#2b86d2" stroke-width=".7" opacity=".8"/><path d="M26.700 5C27.500 -1 23 -3.500 18 -1.500 9 2.500 -.5 15 -1.500 23-2 27.500 1.500 28 5.500 26.300" fill="none" stroke="#f5b20c" stroke-width="2"/><path d="M22 -1.600C18 -1 8 6 1 19" fill="none" stroke="#ffe56e" stroke-width=".8"/></svg>
<div style="left:463px;top:978px;width:60px;height:38px;background:#a8dff3;border-left:1px solid #3f6c7d;border-right:1px solid #3f6c7d"></div>
<svg style="left:477px;top:981px" width="32" height="32" viewBox="0 0 32 32"><circle cx="16" cy="16" r="15.500" fill="#fff"/><path d="M16 .5A15.500 15.500 0 0 1 29.400 8.200H16a7.800 7.800 0 0 0-7.300 5L3.300 6.500A15.500 15.500 0 0 1 16 .5z" fill="#e33b2e"/><path d="M29.400 8.200A15.500 15.500 0 0 1 15 31.500l6.800-11.600A7.800 7.800 0 0 0 22 8.200z" fill="#f9c21a"/><path d="M15 31.500A15.500 15.500 0 0 1 3.300 6.500l6 10.500a7.800 7.800 0 0 0 9 5.500z" fill="#2f9e49"/><circle cx="16" cy="16" r="7" fill="#fff"/><circle cx="16" cy="16" r="5.600" fill="#3b7ded"/></svg>
<div style="left:526px;top:978px;width:59px;height:38px;border-left:1px solid #3f6c7d;border-right:1px solid #3f6c7d"></div>
<svg style="left:538px;top:981px" width="34" height="32" viewBox="0 0 34 32"><rect x="1.500" y="1.500" width="30" height="22" fill="#2b2b2b" stroke="#b9b9b9" stroke-width="2"/><path d="M5 6l4 2-4 2M10 11h3" stroke="#fff" stroke-width="1.300" fill="none"/><path d="M9 20l8-6 5 3-8 7z" fill="#e33a3a"/><path d="M17 14l8-6 5 3v5l-8 4z" fill="#3b7ddd"/><path d="M18 24l8-6 5 2v5l-10 6z" fill="#86c92d"/></svg>
<div style="left:588px;top:978px;width:50px;height:38px;background:radial-gradient(ellipse at 50% 60%,#dcb0cd 0%,#a64d86 70%,#8a3a70 100%);border:1px solid #7a3563"></div>
<div style="left:641px;top:978px;width:1px;height:38px;background:#a05e8c"></div>
<div style="left:645px;top:978px;width:1px;height:38px;background:#a05e8c"></div>
<svg style="left:596px;top:980px" width="36" height="34" viewBox="0 0 36 34"><g fill="#8e1450"><ellipse cx="21" cy="6" rx="11.500" ry="4.500"/><path d="M9.500 9c2 3 21 3 23 0v6c-2 3-21 3-23 0zM9.500 17.500c2 3 21 3 23 0v6c-2 3-21 3-23 0zM14 26c5 2 15 1.500 18.500-.5v3.500c-3 3-14 3.500-18.500 2z"/></g><g transform="translate(11,25)" fill="#fff"><path d="M-1.500-8h3l.5 2 1.700.8 1.800-1 2 2-1 1.800.8 1.700 2 .5v3l-2 .5-.8 1.700 1 1.800-2 2-1.800-1-1.700.8-.5 2h-3l-.5-2-1.700-.8-1.800 1-2-2 1-1.800-.8-1.700-2-.5v-3l2-.5.8-1.700-1-1.800 2-2 1.800 1 1.700-.8z"/><circle r="2.600" fill="#a64d86"/></g></svg>
<svg style="left:1593px;top:988px" width="18" height="18" viewBox="0 0 18 18"><rect x="4" y="1" width="10" height="9" rx="2" fill="#f3f3f3" stroke="#c9c9c9" stroke-width=".6"/><circle cx="9" cy="5.500" r="2" fill="#e23744"/><rect x="1.500" y="9" width="15" height="7" rx="1" fill="#e8475a"/><rect x="4" y="11" width="10" height="2.500" fill="#fff"/></svg>
<svg style="left:1616px;top:988px" width="18" height="18" viewBox="0 0 18 18"><path d="M4 3l8-2v14l-8 2z" fill="#c9c9bf" stroke="#555" stroke-width=".8"/><path d="M12 1l3 1.500V15l-3 .5z" fill="#333"/><path d="M6 6l4-.8M6 8.500l4-.8" stroke="#555" stroke-width=".8"/></svg>
<svg style="left:1640px;top:988px" width="18" height="18" viewBox="0 0 18 18"><rect x="1" y="2" width="16" height="13" fill="#fba81e" stroke="#fff" stroke-width="1.200"/><rect x="1" y="2" width="16" height="3.500" fill="#fff"/><path d="M3 3.800h1M5.500 3.800h1M8 3.800h1" stroke="#555" stroke-width="1"/></svg>
<svg style="left:1664px;top:988px" width="18" height="18" viewBox="0 0 18 18"><path d="M2 3l6-2 6 2v6c0 4-3 6.500-6 8-3-1.500-6-4-6-8z" fill="#f6a21c"/><path d="M9 4c1 3-3 4-2 7s4 2 3-1c2 1 2 5-1 6" fill="none" stroke="#fff" stroke-width="1.500"/><circle cx="14" cy="3" r="2.500" fill="#f2552c"/></svg>
<svg style="left:1688px;top:988px" width="18" height="18" viewBox="0 0 18 18"><rect x="5" y="3" width="11" height="8" fill="#e9f3fb" stroke="#4a5a66" stroke-width="1.200"/><path d="M8 14.500h6M11 11v3" stroke="#4a5a66" stroke-width="1.300"/><rect x="1.500" y="1.500" width="4" height="5" rx="1" fill="#fff" stroke="#4a5a66" stroke-width="1"/><path d="M3.500 6.500v7h4" stroke="#4a5a66" stroke-width="1" fill="none"/></svg>
<svg style="left:1712px;top:988px" width="18" height="18" viewBox="0 0 18 18"><path d="M2 6.500h3l4-4v13l-4-4H2z" fill="#eee" stroke="#555" stroke-width=".9"/><circle cx="13" cy="12.500" r="4" fill="#e0262e"/><path d="M11.200 10.700l3.600 3.600M14.800 10.700l-3.600 3.600" stroke="#fff" stroke-width="1.300"/></svg>
<svg style="left:1736px;top:988px" width="18" height="18" viewBox="0 0 18 18"><path d="M3.500 1.500v15" stroke="#555" stroke-width="1.300"/><path d="M4 2.500c3-1.500 5 1.500 9 0v7c-4 1.500-6-1.500-9 0z" fill="#f5f5f5" stroke="#666" stroke-width=".8"/><circle cx="13" cy="12.500" r="4" fill="#e0262e"/><path d="M11.200 10.700l3.600 3.600M14.800 10.700l-3.600 3.600" stroke="#fff" stroke-width="1.300"/></svg>
<div class="t" style="left:1764px;top:986px;height:22px;line-height:22px;font-size:15px;color:#111;text-shadow:0 0 1px #fff,0 0 2px #fff,0 0 2px #fff">中</div>
<svg style="left:1792px;top:987px" width="20" height="20" viewBox="0 0 20 20"><rect x="1.500" y="1.500" width="16" height="16" rx="4" fill="#f4541d" transform="rotate(-8 9.500 9.500)"/><path d="M13 6c-2-1.500-6.500-1-6.500 1.200 0 2.500 6.500 1.500 6.500 4.300 0 2.300-5 2.500-7.500 1" fill="none" stroke="#fff" stroke-width="2.200"/></svg>
<div class="t" style="left:1849px;top:979px;height:19px;line-height:19px;font-size:12px;color:#111;letter-spacing:-0.006px">15:16</div>
<div class="t" style="left:1831px;top:997px;height:19px;line-height:19px;font-size:12px;color:#111;letter-spacing:0.461px">2026-01-09</div>
<div style="left:0px;top:1021px;width:1920px;height:1px;background:#7a7a7a"></div>
<div style="left:0px;top:1022px;width:1920px;height:18px;background:#fff"></div>
<div class="t" style="left:6px;top:1022px;height:18px;line-height:18px;font-size:11px;font-weight:bold;color:#000;letter-spacing:-0.248px">UNREGISTERED VERSION</div>
<div class="t" style="left:147px;top:1022px;height:18px;line-height:18px;font-size:11px;color:#000">-</div>
<div class="t" style="left:156px;top:1022px;height:18px;line-height:18px;font-size:11px;color:#000;letter-spacing:-0.085px">Please support MobaXterm by subscribing to the professional edition here:</div>
<div class="t" style="left:518px;top:1022px;height:18px;line-height:18px;font-size:11px;color:#0a1ef0;letter-spacing:0.185px">https://mobaxterm.mobatek.net</div>
<svg style="left:1902px;top:1023px" width="17" height="16" viewBox="0 0 17 16"><rect x=".5" y="1.500" width="15" height="10" fill="#bfdff8" stroke="#557a8c" stroke-width="1"/><path d="M3.500 14.500h9M8 11.500v3" stroke="#557a8c" stroke-width="1.200"/></svg>
<div style="left:0px;top:1040px;width:1920px;height:8px;background:#0b2a4a"></div>
<div style="left:1915px;top:1040px;width:1px;height:8px;background:#7f8ea0"></div>
<div class="t" style="left:1797px;top:1044px;height:14px;line-height:14px;font-size:12px;color:#fff">15:16</div>
<div style="left:1779px;top:534px;width:95px;height:44px;border:3px solid #f0323a"></div>
<svg style="left:0;top:0" width="1920" height="1048" viewBox="0 0 1920 1048"><polygon points="1766.1,556.8 1440.7,665.4 1081.6,785.2 922.3,836.9 926.3,839.6 908.3,837.6 921.9,825.1 920.0,829.9 1079.0,777.2 1439.4,661.3 1765.9,556.2" fill="#f5363c"/></svg>
<svg style="left:1780px;top:812px" width="116" height="62" viewBox="0 0 116 62"><path d="M71 11.200H98a11 11 0 0 1 11 11V45a11 11 0 0 1-11 11H16a11 11 0 0 1-11-11V22.200c0-4 1.500-7 4.500-9" fill="#fff" stroke="#1e1e1e" stroke-width="1.700"/><path d="M8 14h60v-3H8z" fill="#fff"/><path d="M11.500 14.500c-1-6 5-10.500 13-10.500s14 4.500 13 10.500c-.3 1.500-25.700 1.500-26 0z" fill="#fff" stroke="#1e1e1e" stroke-width="1.700"/><ellipse cx="21" cy="8.800" rx="3.300" ry="2.900" fill="#1e1e1e"/><path d="M45.500 14.500c-1-6 5-10.500 13-10.500s14 4.500 13 10.500c-.3 1.500-25.700 1.500-26 0z" fill="#fff" stroke="#1e1e1e" stroke-width="1.700"/><ellipse cx="55" cy="8.800" rx="3.300" ry="2.900" fill="#1e1e1e"/><path d="M24 25l4 4M32 20l8 9M44 23l6 7M55 24l4 4" stroke="#555" stroke-width=".8"/><circle cx="85.500" cy="22.500" r="2.800" fill="none" stroke="#555" stroke-width=".9"/><path d="M90 26.500c1 1 .5 3-1.500 3.500" stroke="#555" stroke-width="1.400" fill="none"/><path d="M54 38c6 2 7 8-3 9.500 5-2.500 5.500-6 3-9.500z" fill="#777"/><path d="M80.500 40l4.500-2c1 1.500 3.500 1.500 4.500 0l4.500 2-1.500 3.500-2-.7V48.500h-6.500v-5.700l-2 .7z" fill="#6a6a6a"/></svg>
<div class="t" style="left:1802px;top:846px;height:18px;line-height:18px;font-size:14px;color:#777">中</div>
</body></html>
